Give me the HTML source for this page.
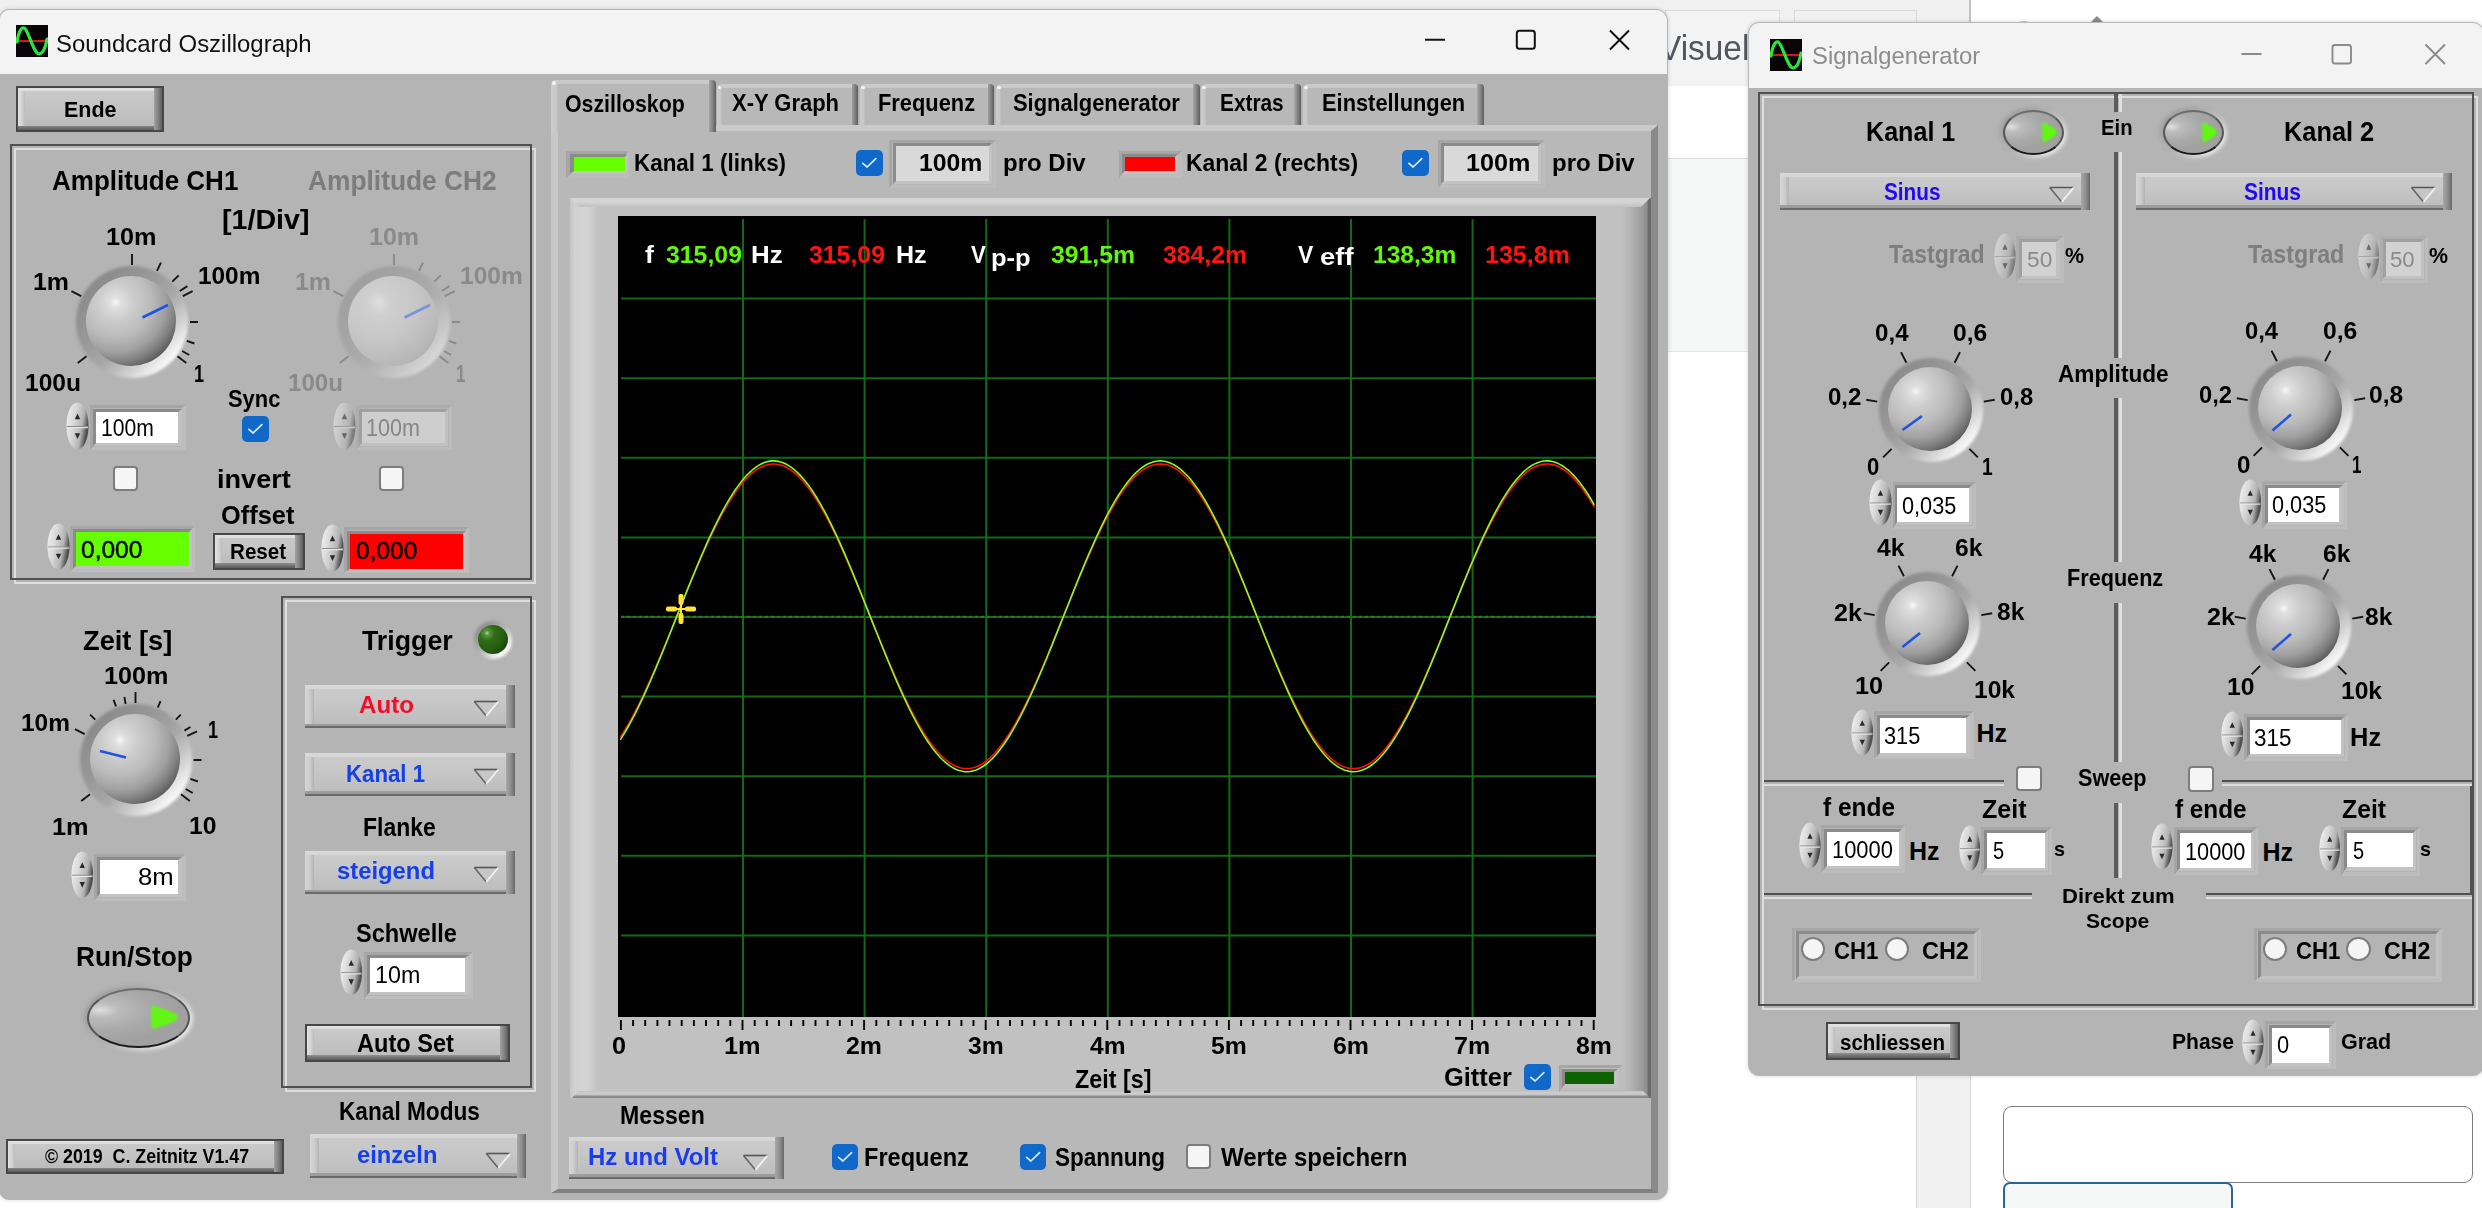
<!DOCTYPE html>
<html><head><meta charset="utf-8"><title>Soundcard Oszillograph</title><style>
html,body{margin:0;padding:0;background:#fff;}
body{width:2482px;height:1208px;overflow:hidden;position:relative;font-family:"Liberation Sans",sans-serif;}
div,span,svg{position:absolute;}
.abs{position:absolute;}
.t{white-space:pre;line-height:1;transform-origin:0 0;display:block;}
.win{box-sizing:border-box;background:#b4b4b4;border:1px solid #b4b4b4;overflow:hidden;box-shadow:0 0 4px rgba(0,0,0,.16);}
</style></head><body>
<div style="left:0.0px;top:0.0px;width:1971.0px;height:85.0px;background:#f0f0f0;"></div>
<div style="left:1969.0px;top:0.0px;width:2.0px;height:85.0px;background:#c2c2c2;"></div>
<div style="left:1665.0px;top:10.0px;width:115.0px;height:76.0px;box-sizing:border-box;border:1.5px solid #dcdcdc;border-bottom:none;background:#f3f3f3;"></div>
<div style="left:1794.0px;top:10.0px;width:123.0px;height:76.0px;box-sizing:border-box;border:1.5px solid #dcdcdc;border-bottom:none;"></div>
<span class="t" style="left:1659.33px;top:31.30px;font-size:34.5px;font-weight:normal;color:#4f565d;transform:scaleX(0.9680);">Visuel</span>
<div style="left:1660.0px;top:158.0px;width:100.0px;height:194.0px;background:#f5f6f6;border-top:1px solid #e0e0e0;border-bottom:1px solid #e6e6e6;box-sizing:border-box;"></div>
<svg style="position:absolute;left:2005px;top:10px" width="110" height="14" viewBox="0 0 110 14"><path d="M11 13.2A8 1.6 0 0 1 27 13.2Z" fill="#777"/><path d="M85 13L92 6L99 13Z" fill="#8a8a8a"/></svg>
<div style="left:1916.0px;top:1075.0px;width:55.0px;height:133.0px;box-sizing:border-box;background:#f0f0f0;border-left:1px solid #d6d6d6;border-right:1px solid #d6d6d6;"></div>
<div style="left:2003.0px;top:1105.5px;width:469.5px;height:77.0px;box-sizing:border-box;border:1.5px solid #7c7c7c;border-radius:9px;background:#fff;"></div>
<div style="left:2003.0px;top:1182.0px;width:229.5px;height:48.0px;box-sizing:border-box;border:2px solid #2b6596;border-radius:7px;background:#f6f8f8;"></div>
<div class="win" style="left:-1px;top:9px;width:1668.5px;height:1191px;border-radius:10px 12px 12px 10px;">
<div class="abs" style="left:0px;top:-10px;width:1px;height:1px">
<div style="left:0.0px;top:10.0px;width:1667.0px;height:64.0px;background:#f3f3f3;"></div>
<svg style="position:absolute;left:16px;top:25px" width="32" height="32" viewBox="0 0 32 32"><rect width="32" height="32" fill="#080408"/><path d="M0 16H32" stroke="#d01818" stroke-width="2"/><path d="M1 17C3 4 7 0 10 5C14 12 17 24 21 28C25 31 29 26 31 14" stroke="#28e63c" stroke-width="3.2" fill="none" stroke-linecap="round"/></svg>
<span class="t" style="left:56.42px;top:31.68px;font-size:24.6px;font-weight:normal;color:#111;transform:scaleX(0.9739);">Soundcard Oszillograph</span>
<svg style="position:absolute;left:1420px;top:24px" width="220" height="32" viewBox="0 0 220 32"><path d="M5 15.8H25" stroke="#111" stroke-width="2"/><rect x="96.8" y="6.8" width="18" height="18" rx="2.5" fill="none" stroke="#111" stroke-width="2"/><path d="M190 6.5L209 25.5M209 6.5L190 25.5" stroke="#111" stroke-width="2"/></svg>
<div style="left:16.0px;top:86.0px;width:148.0px;height:45.5px;box-sizing:border-box;border:2px solid #474747;background:linear-gradient(90deg,transparent calc(100% - 8px),#a2a2a2 calc(100% - 8px),#7a7a7a calc(100% - 3px),#5c5c5c 100%),linear-gradient(180deg,transparent calc(100% - 4.5px),#8c8c8c calc(100% - 4.5px),#6e6e6e calc(100% - 2px),#5a5a5a 100%),linear-gradient(180deg,#e4e4e4 0,#dcdcdc 3px,transparent 3.5px),linear-gradient(90deg,#e2e2e2 0,#d2d2d2 4px,#bcbcbc 7px,transparent 7.5px),linear-gradient(180deg,#cacaca 0%,#c3c3c3 50%,#b9b9b9 100%);"></div>
<span class="t" style="left:64.10px;top:100.30px;font-size:21.5px;font-weight:bold;color:#000;transform:scaleX(0.9995);">Ende</span>
<div style="left:14.0px;top:148.0px;width:522.0px;height:436.0px;box-sizing:border-box;border:2px solid #dedede;"></div>
<div style="left:10.0px;top:144.0px;width:522.0px;height:436.0px;box-sizing:border-box;border:2px solid #505050;"></div>
<span class="t" style="left:51.85px;top:166.37px;font-size:28.5px;font-weight:bold;color:#000;transform:scaleX(0.9123);">Amplitude CH1</span>
<span class="t" style="left:308.34px;top:166.37px;font-size:28.5px;font-weight:bold;color:#7c7c7c;transform:scaleX(0.9241);">Amplitude CH2</span>
<span class="t" style="left:222.42px;top:204.87px;font-size:28.5px;font-weight:bold;color:#000;transform:scaleX(1.0051);">[1/Div]</span>
<div style="left:76.0px;top:266.0px;width:112.0px;height:112.0px;border-radius:50%;background:linear-gradient(135deg,#8a8a8a 14%,#989898 38%,#a8a8a8 56%,#d2d2d2 72%,#ffffff 86%);filter:blur(1.5px);"></div>
<div style="left:86.0px;top:276.0px;width:90.0px;height:90.0px;border-radius:50%;background:radial-gradient(circle at 33% 29%,#f8f8f8 0%,#e0e0e0 6%,#cdcdcd 20%,#bbbbbb 40%,#a0a0a0 57%,#7e7e7e 69%,#5a5a5a 79%);"></div>
<svg style="position:absolute;left:0;top:0;overflow:visible" width="1" height="1"><path d="M132.0 265.0L132.0 254.0M157.0 270.8L160.9 262.7M172.3 281.7L178.7 275.3M179.8 291.0L187.4 286.1M182.8 296.1L192.6 291.1M190.0 322.0L198.0 322.0M186.8 340.9L194.4 343.5M182.2 351.0L189.2 355.0M177.5 356.3L186.3 362.9M81.2 296.1L71.4 291.1M86.5 356.3L77.7 362.9" stroke="#151515" stroke-width="1.9" fill="none"/><path d="M142.5 317.5L168 305" stroke="#2152e0" stroke-width="2.6" fill="none"/></svg>
<span class="t" style="left:106.48px;top:226.03px;font-size:23px;font-weight:bold;color:#000;transform:scaleX(1.0985);">10m</span>
<span class="t" style="left:32.51px;top:270.53px;font-size:23px;font-weight:bold;color:#000;transform:scaleX(1.0829);">1m</span>
<span class="t" style="left:197.54px;top:264.53px;font-size:23px;font-weight:bold;color:#000;transform:scaleX(1.0602);">100m</span>
<span class="t" style="left:25.02px;top:372.03px;font-size:23px;font-weight:bold;color:#000;transform:scaleX(1.0693);">100u</span>
<span class="t" style="left:193.91px;top:363.03px;font-size:23px;font-weight:bold;color:#000;transform:scaleX(0.7863);">1</span>
<div style="left:338.0px;top:266.0px;width:112.0px;height:112.0px;border-radius:50%;background:linear-gradient(135deg,#8a8a8a 14%,#989898 38%,#a8a8a8 56%,#d2d2d2 72%,#ffffff 86%);filter:blur(1.5px);opacity:.5;"></div>
<div style="left:348.0px;top:276.0px;width:90.0px;height:90.0px;border-radius:50%;background:radial-gradient(circle at 34% 30%,#dedede 0%,#cfcfcf 14%,#c6c6c6 45%,#b8b8b8 72%,#9c9c9c 100%);"></div>
<svg style="position:absolute;left:0;top:0;overflow:visible" width="1" height="1"><path d="M394.0 265.0L394.0 254.0M419.0 270.8L422.9 262.7M434.3 281.7L440.7 275.3M441.8 291.0L449.4 286.1M444.8 296.1L454.6 291.1M452.0 322.0L460.0 322.0M448.8 340.9L456.4 343.5M444.2 351.0L451.2 355.0M439.5 356.3L448.3 362.9M343.2 296.1L333.4 291.1M348.5 356.3L339.7 362.9" stroke="#8a8a8a" stroke-width="1.9" fill="none"/><path d="M404.5 317.5L430 305" stroke="#7a92dc" stroke-width="2.6" fill="none"/></svg>
<span class="t" style="left:368.50px;top:226.03px;font-size:23px;font-weight:bold;color:#8a8a8a;transform:scaleX(1.0870);">10m</span>
<span class="t" style="left:294.51px;top:270.53px;font-size:23px;font-weight:bold;color:#8a8a8a;transform:scaleX(1.0829);">1m</span>
<span class="t" style="left:459.52px;top:264.53px;font-size:23px;font-weight:bold;color:#8a8a8a;transform:scaleX(1.0691);">100m</span>
<span class="t" style="left:287.55px;top:372.03px;font-size:23px;font-weight:bold;color:#8a8a8a;transform:scaleX(1.0491);">100u</span>
<span class="t" style="left:456.48px;top:363.03px;font-size:23px;font-weight:bold;color:#8a8a8a;transform:scaleX(0.7401);">1</span>
<span class="t" style="left:228.34px;top:387.26px;font-size:24.5px;font-weight:bold;color:#000;transform:scaleX(0.8934);">Sync</span>
<div style="left:242.0px;top:416.0px;width:26.5px;height:26.0px;border-radius:5px;background:#1068c9;"><svg width="26.5" height="26.0" viewBox="0 0 26 26" style="position:absolute;left:0;top:0"><path d="M6.6 13.4L10.9 17L19.6 8.6" stroke="#d8ecff" stroke-width="1.7" fill="none" stroke-linecap="round" stroke-linejoin="round"/></svg></div>
<div style="left:66.0px;top:402.0px;width:23.0px;height:48.0px;"><svg width="23.0" height="48.0" viewBox="0 0 22 46" preserveAspectRatio="none" style="position:absolute;left:0;top:0;"><defs><linearGradient id="spg" x1="0" y1="0" x2="1" y2="0.35"><stop offset="0" stop-color="#f4f4f4"/><stop offset=".4" stop-color="#dadada"/><stop offset=".78" stop-color="#b4b4b4"/><stop offset="1" stop-color="#505050"/></linearGradient></defs><ellipse cx="11" cy="23" rx="10.6" ry="22.6" fill="url(#spg)"/><path d="M1 23.5H21" stroke="#8a8a8a" stroke-width="1"/><path d="M1 24.6H21" stroke="#eee" stroke-width="1"/><path d="M11 11L13.6 16.5H8.4Z" fill="#2a2a2a"/><path d="M11 35.5L13.6 30H8.4Z" fill="#2a2a2a"/></svg></div>
<div style="left:89.5px;top:405.0px;width:96.5px;height:44.5px;box-sizing:border-box;border-style:solid;border-width:3.50px 4.00px 3.75px 3.50px;border-color:#a6a6a6 #bdbdbd #bdbdbd #a6a6a6;"></div>
<div style="left:93.0px;top:408.5px;width:89.0px;height:37.2px;box-sizing:border-box;border-style:solid;border-width:3.50px 4.00px 3.75px 3.50px;border-color:#8b8b8b #c2c2c2 #c2c2c2 #8b8b8b;background:#fff;"></div>
<span class="t" style="left:100.91px;top:416.53px;font-size:23px;font-weight:normal;color:#000;transform:scaleX(0.9192);">100m</span>
<div style="left:333.0px;top:402.0px;width:23.0px;height:48.0px;"><svg width="23.0" height="48.0" viewBox="0 0 22 46" preserveAspectRatio="none" style="position:absolute;left:0;top:0;opacity:.55;"><defs><linearGradient id="spg" x1="0" y1="0" x2="1" y2="0.35"><stop offset="0" stop-color="#f4f4f4"/><stop offset=".4" stop-color="#dadada"/><stop offset=".78" stop-color="#b4b4b4"/><stop offset="1" stop-color="#505050"/></linearGradient></defs><ellipse cx="11" cy="23" rx="10.6" ry="22.6" fill="url(#spg)"/><path d="M1 23.5H21" stroke="#8a8a8a" stroke-width="1"/><path d="M1 24.6H21" stroke="#eee" stroke-width="1"/><path d="M11 11L13.6 16.5H8.4Z" fill="#2a2a2a"/><path d="M11 35.5L13.6 30H8.4Z" fill="#2a2a2a"/></svg></div>
<div style="left:356.0px;top:405.0px;width:96.0px;height:44.5px;box-sizing:border-box;border-style:solid;border-width:3.50px 3.75px 3.75px 3.25px;border-color:#adadad #bcbcbc #bcbcbc #adadad;"></div>
<div style="left:359.2px;top:408.5px;width:89.0px;height:37.2px;box-sizing:border-box;border-style:solid;border-width:3.50px 3.75px 3.75px 3.25px;border-color:#a0a0a0 #c0c0c0 #c0c0c0 #a0a0a0;background:#cecece;"></div>
<span class="t" style="left:365.88px;top:416.53px;font-size:23px;font-weight:normal;color:#868686;transform:scaleX(0.9376);">100m</span>
<div style="left:112.5px;top:466.0px;width:25.0px;height:25.0px;box-sizing:border-box;border-radius:4px;background:#f5f5f5;border:2px solid #7c7c7c;"></div>
<div style="left:378.5px;top:466.0px;width:25.0px;height:25.0px;box-sizing:border-box;border-radius:4px;background:#f5f5f5;border:2px solid #7c7c7c;"></div>
<span class="t" style="left:217.10px;top:465.57px;font-size:26.5px;font-weight:bold;color:#000;transform:scaleX(1.0220);">invert</span>
<span class="t" style="left:221.48px;top:502.84px;font-size:25px;font-weight:bold;color:#000;transform:scaleX(1.0159);">Offset</span>
<div style="left:47.0px;top:523.0px;width:23.0px;height:47.0px;"><svg width="23.0" height="47.0" viewBox="0 0 22 46" preserveAspectRatio="none" style="position:absolute;left:0;top:0;"><defs><linearGradient id="spg" x1="0" y1="0" x2="1" y2="0.35"><stop offset="0" stop-color="#f4f4f4"/><stop offset=".4" stop-color="#dadada"/><stop offset=".78" stop-color="#b4b4b4"/><stop offset="1" stop-color="#505050"/></linearGradient></defs><ellipse cx="11" cy="23" rx="10.6" ry="22.6" fill="url(#spg)"/><path d="M1 23.5H21" stroke="#8a8a8a" stroke-width="1"/><path d="M1 24.6H21" stroke="#eee" stroke-width="1"/><path d="M11 11L13.6 16.5H8.4Z" fill="#2a2a2a"/><path d="M11 35.5L13.6 30H8.4Z" fill="#2a2a2a"/></svg></div>
<div style="left:70.0px;top:526.0px;width:125.0px;height:46.0px;box-sizing:border-box;border-style:solid;border-width:3.00px 3.25px 3.00px 3.00px;border-color:#a6a6a6 #bdbdbd #bdbdbd #a6a6a6;"></div>
<div style="left:73.0px;top:529.0px;width:118.8px;height:40.0px;box-sizing:border-box;border-style:solid;border-width:3.00px 3.25px 3.00px 3.00px;border-color:#8b8b8b #c2c2c2 #c2c2c2 #8b8b8b;background:#66ff00;"></div>
<span class="t" style="left:80.52px;top:537.68px;font-size:24px;font-weight:normal;color:#000;transform:scaleX(1.0223);-webkit-text-stroke:.4px #000;">0,000</span>
<div style="left:212.5px;top:532.5px;width:92.0px;height:37.0px;box-sizing:border-box;border:2px solid #474747;background:linear-gradient(90deg,transparent calc(100% - 8px),#a2a2a2 calc(100% - 8px),#7a7a7a calc(100% - 3px),#5c5c5c 100%),linear-gradient(180deg,transparent calc(100% - 4.5px),#8c8c8c calc(100% - 4.5px),#6e6e6e calc(100% - 2px),#5a5a5a 100%),linear-gradient(180deg,#e4e4e4 0,#dcdcdc 3px,transparent 3.5px),linear-gradient(90deg,#e2e2e2 0,#d2d2d2 4px,#bcbcbc 7px,transparent 7.5px),linear-gradient(180deg,#cacaca 0%,#c3c3c3 50%,#b9b9b9 100%);"></div>
<span class="t" style="left:230.16px;top:540.95px;font-size:22.5px;font-weight:bold;color:#000;transform:scaleX(0.9158);">Reset</span>
<div style="left:320.5px;top:524.0px;width:23.0px;height:48.0px;"><svg width="23.0" height="48.0" viewBox="0 0 22 46" preserveAspectRatio="none" style="position:absolute;left:0;top:0;"><defs><linearGradient id="spg" x1="0" y1="0" x2="1" y2="0.35"><stop offset="0" stop-color="#f4f4f4"/><stop offset=".4" stop-color="#dadada"/><stop offset=".78" stop-color="#b4b4b4"/><stop offset="1" stop-color="#505050"/></linearGradient></defs><ellipse cx="11" cy="23" rx="10.6" ry="22.6" fill="url(#spg)"/><path d="M1 23.5H21" stroke="#8a8a8a" stroke-width="1"/><path d="M1 24.6H21" stroke="#eee" stroke-width="1"/><path d="M11 11L13.6 16.5H8.4Z" fill="#2a2a2a"/><path d="M11 35.5L13.6 30H8.4Z" fill="#2a2a2a"/></svg></div>
<div style="left:343.5px;top:527.0px;width:125.5px;height:46.0px;box-sizing:border-box;border-style:solid;border-width:3.50px 3.25px 2.50px 3.25px;border-color:#a6a6a6 #bdbdbd #bdbdbd #a6a6a6;"></div>
<div style="left:346.8px;top:530.5px;width:119.0px;height:40.0px;box-sizing:border-box;border-style:solid;border-width:3.50px 3.25px 2.50px 3.25px;border-color:#8b8b8b #c2c2c2 #c2c2c2 #8b8b8b;background:#ff0000;"></div>
<span class="t" style="left:355.52px;top:539.18px;font-size:24px;font-weight:normal;color:#000;transform:scaleX(1.0223);-webkit-text-stroke:.4px #000;">0,000</span>
<span class="t" style="left:83.18px;top:626.37px;font-size:28.5px;font-weight:bold;color:#000;transform:scaleX(0.9554);">Zeit [s]</span>
<span class="t" style="left:103.99px;top:664.53px;font-size:23px;font-weight:bold;color:#000;transform:scaleX(1.0959);">100m</span>
<div style="left:79.5px;top:704.0px;width:112.0px;height:112.0px;border-radius:50%;background:linear-gradient(135deg,#8a8a8a 14%,#989898 38%,#a8a8a8 56%,#d2d2d2 72%,#ffffff 86%);filter:blur(1.5px);"></div>
<div style="left:89.5px;top:714.0px;width:90.0px;height:90.0px;border-radius:50%;background:radial-gradient(circle at 33% 29%,#f8f8f8 0%,#e0e0e0 6%,#cdcdcd 20%,#bbbbbb 40%,#a0a0a0 57%,#7e7e7e 69%,#5a5a5a 79%);"></div>
<svg style="position:absolute;left:0;top:0;overflow:visible" width="1" height="1"><path d="M135.5 703.0L135.5 692.0M125.6 703.9L124.4 697.0M116.0 706.4L113.6 699.9M157.8 707.5L160.5 701.1M175.8 719.7L180.8 714.7M184.4 730.6L190.4 727.0M187.2 735.9L197.1 731.3M193.5 760.0L201.5 760.0M190.3 778.9L197.9 781.5M185.7 789.0L192.7 793.0M181.0 794.3L189.8 800.9M84.7 734.1L74.9 729.1M95.2 719.7L90.2 714.7M90.0 794.3L81.2 800.9" stroke="#151515" stroke-width="1.9" fill="none"/><path d="M100 751L126 757.5" stroke="#2152e0" stroke-width="2.6" fill="none"/></svg>
<span class="t" style="left:21.03px;top:712.03px;font-size:23px;font-weight:bold;color:#000;transform:scaleX(1.0638);">10m</span>
<span class="t" style="left:207.91px;top:718.53px;font-size:23px;font-weight:bold;color:#000;transform:scaleX(0.7863);">1</span>
<span class="t" style="left:52.48px;top:816.03px;font-size:23px;font-weight:bold;color:#000;transform:scaleX(1.0993);">1m</span>
<span class="t" style="left:189.01px;top:814.53px;font-size:23px;font-weight:bold;color:#000;transform:scaleX(1.0762);">10</span>
<div style="left:70.5px;top:850.5px;width:22.5px;height:47.5px;"><svg width="22.5" height="47.5" viewBox="0 0 22 46" preserveAspectRatio="none" style="position:absolute;left:0;top:0;"><defs><linearGradient id="spg" x1="0" y1="0" x2="1" y2="0.35"><stop offset="0" stop-color="#f4f4f4"/><stop offset=".4" stop-color="#dadada"/><stop offset=".78" stop-color="#b4b4b4"/><stop offset="1" stop-color="#505050"/></linearGradient></defs><ellipse cx="11" cy="23" rx="10.6" ry="22.6" fill="url(#spg)"/><path d="M1 23.5H21" stroke="#8a8a8a" stroke-width="1"/><path d="M1 24.6H21" stroke="#eee" stroke-width="1"/><path d="M11 11L13.6 16.5H8.4Z" fill="#2a2a2a"/><path d="M11 35.5L13.6 30H8.4Z" fill="#2a2a2a"/></svg></div>
<div style="left:93.5px;top:853.5px;width:92.5px;height:47.0px;box-sizing:border-box;border-style:solid;border-width:3.25px 4.00px 3.50px 3.25px;border-color:#a6a6a6 #bdbdbd #bdbdbd #a6a6a6;"></div>
<div style="left:96.8px;top:856.8px;width:85.2px;height:40.2px;box-sizing:border-box;border-style:solid;border-width:3.25px 4.00px 3.50px 3.25px;border-color:#8b8b8b #c2c2c2 #c2c2c2 #8b8b8b;background:#fff;"></div>
<span class="t" style="left:137.97px;top:865.53px;font-size:23px;font-weight:normal;color:#000;transform:scaleX(1.1166);">8m</span>
<span class="t" style="left:76.29px;top:942.37px;font-size:28.5px;font-weight:bold;color:#000;transform:scaleX(0.9217);">Run/Stop</span>
<div style="left:83.5px;top:984.5px;width:109.4px;height:66.0px;border-radius:50%;background:linear-gradient(135deg,#9a9a9a 15%,#b0b0b0 45%,#f2f2f2 88%);filter:blur(2.2px);"></div>
<div style="left:86.5px;top:987.5px;width:103.4px;height:60.0px;box-sizing:border-box;border-radius:50%;border:2px solid #555;border-bottom-color:#1c1c1c;border-top-color:#6c6c6c;background:radial-gradient(ellipse at 12% 36%,#dedede 0%,#bcbcbc 14%,#aaaaaa 38%,#a0a0a0 65%,#a4a4a4 100%);"></div>
<svg style="position:absolute;left:148.8px;top:1002.8px;filter:blur(.8px)" width="30.2" height="28.4" viewBox="0 0 30 26" preserveAspectRatio="none"><path d="M3 2Q1 13 3 24Q16 21 27 16Q30 13 27 10Q16 5 3 2Z" fill="#62f614"/></svg>
<div style="left:284.5px;top:600.0px;width:251.5px;height:492.0px;box-sizing:border-box;border:2px solid #dedede;"></div>
<div style="left:280.5px;top:596.0px;width:251.5px;height:492.0px;box-sizing:border-box;border:2px solid #505050;"></div>
<span class="t" style="left:362.23px;top:626.37px;font-size:28.5px;font-weight:bold;color:#000;transform:scaleX(0.9385);">Trigger</span>
<div style="left:473.5px;top:620.5px;width:38.5px;height:38.0px;border-radius:50%;background:linear-gradient(135deg,#8e8e8e 18%,#b4b4b4 50%,#ffffff 82%);filter:blur(1.8px);"></div>
<div style="left:477.5px;top:624.5px;width:30.5px;height:29.5px;border-radius:50%;background:radial-gradient(circle at 30% 28%,#a8dc98 0%,#5a9640 8%,#2f6c17 26%,#265c10 58%,#1a420a 85%,#143408 100%);filter:blur(.5px);"></div>
<div style="left:304.5px;top:684.5px;width:210.0px;height:43.0px;background:linear-gradient(90deg,transparent calc(100% - 9px),#a8a8a8 calc(100% - 9px),#8c8c8c calc(100% - 4px),#686868 100%),linear-gradient(180deg,transparent calc(100% - 4.5px),#9e9e9e calc(100% - 4.5px),#9a9a9a calc(100% - 2.2px),#6a6a6a calc(100% - 2.2px)),linear-gradient(180deg,#d8d8d8 0,#d6d6d6 4px,transparent 4px),linear-gradient(90deg,#d6d6d6 0,#cccccc 5px,#b6b6b6 8.5px,transparent 9px),linear-gradient(180deg,#cbcbcb 0%,#c7c7c7 40%,#bbbbbb 100%);"></div>
<svg style="position:absolute;left:472.5px;top:699.5px" width="26.5" height="17.0" viewBox="0 0 26 17"><path d="M1 1.5H25L13 16Z" fill="#c6c6c6" stroke="none"/><path d="M1 1.5H25" stroke="#555" stroke-width="1.6" fill="none"/><path d="M1 1.5L13 16" stroke="#666" stroke-width="1.6" fill="none"/><path d="M25 1.5L13 16" stroke="#f2f2f2" stroke-width="1.8" fill="none"/></svg>
<span class="t" style="left:359.40px;top:693.26px;font-size:24.5px;font-weight:bold;color:#f0102c;transform:scaleX(0.9859);">Auto</span>
<div style="left:304.5px;top:752.5px;width:210.0px;height:43.0px;background:linear-gradient(90deg,transparent calc(100% - 9px),#a8a8a8 calc(100% - 9px),#8c8c8c calc(100% - 4px),#686868 100%),linear-gradient(180deg,transparent calc(100% - 4.5px),#9e9e9e calc(100% - 4.5px),#9a9a9a calc(100% - 2.2px),#6a6a6a calc(100% - 2.2px)),linear-gradient(180deg,#d8d8d8 0,#d6d6d6 4px,transparent 4px),linear-gradient(90deg,#d6d6d6 0,#cccccc 5px,#b6b6b6 8.5px,transparent 9px),linear-gradient(180deg,#cbcbcb 0%,#c7c7c7 40%,#bbbbbb 100%);"></div>
<svg style="position:absolute;left:472.5px;top:767.5px" width="26.5" height="17.0" viewBox="0 0 26 17"><path d="M1 1.5H25L13 16Z" fill="#c6c6c6" stroke="none"/><path d="M1 1.5H25" stroke="#555" stroke-width="1.6" fill="none"/><path d="M1 1.5L13 16" stroke="#666" stroke-width="1.6" fill="none"/><path d="M25 1.5L13 16" stroke="#f2f2f2" stroke-width="1.8" fill="none"/></svg>
<span class="t" style="left:346.06px;top:761.76px;font-size:24.5px;font-weight:bold;color:#1440e6;transform:scaleX(0.9070);">Kanal 1</span>
<span class="t" style="left:362.51px;top:815.34px;font-size:25px;font-weight:bold;color:#000;transform:scaleX(0.9186);">Flanke</span>
<div style="left:304.5px;top:850.5px;width:210.0px;height:43.0px;background:linear-gradient(90deg,transparent calc(100% - 9px),#a8a8a8 calc(100% - 9px),#8c8c8c calc(100% - 4px),#686868 100%),linear-gradient(180deg,transparent calc(100% - 4.5px),#9e9e9e calc(100% - 4.5px),#9a9a9a calc(100% - 2.2px),#6a6a6a calc(100% - 2.2px)),linear-gradient(180deg,#d8d8d8 0,#d6d6d6 4px,transparent 4px),linear-gradient(90deg,#d6d6d6 0,#cccccc 5px,#b6b6b6 8.5px,transparent 9px),linear-gradient(180deg,#cbcbcb 0%,#c7c7c7 40%,#bbbbbb 100%);"></div>
<svg style="position:absolute;left:472.5px;top:865.5px" width="26.5" height="17.0" viewBox="0 0 26 17"><path d="M1 1.5H25L13 16Z" fill="#c6c6c6" stroke="none"/><path d="M1 1.5H25" stroke="#555" stroke-width="1.6" fill="none"/><path d="M1 1.5L13 16" stroke="#666" stroke-width="1.6" fill="none"/><path d="M25 1.5L13 16" stroke="#f2f2f2" stroke-width="1.8" fill="none"/></svg>
<span class="t" style="left:337.17px;top:859.26px;font-size:24.5px;font-weight:bold;color:#1440e6;transform:scaleX(0.9721);">steigend</span>
<span class="t" style="left:355.79px;top:920.84px;font-size:25px;font-weight:bold;color:#000;transform:scaleX(0.9431);">Schwelle</span>
<div style="left:340.0px;top:948.5px;width:22.5px;height:46.5px;"><svg width="22.5" height="46.5" viewBox="0 0 22 46" preserveAspectRatio="none" style="position:absolute;left:0;top:0;"><defs><linearGradient id="spg" x1="0" y1="0" x2="1" y2="0.35"><stop offset="0" stop-color="#f4f4f4"/><stop offset=".4" stop-color="#dadada"/><stop offset=".78" stop-color="#b4b4b4"/><stop offset="1" stop-color="#505050"/></linearGradient></defs><ellipse cx="11" cy="23" rx="10.6" ry="22.6" fill="url(#spg)"/><path d="M1 23.5H21" stroke="#8a8a8a" stroke-width="1"/><path d="M1 24.6H21" stroke="#eee" stroke-width="1"/><path d="M11 11L13.6 16.5H8.4Z" fill="#2a2a2a"/><path d="M11 35.5L13.6 30H8.4Z" fill="#2a2a2a"/></svg></div>
<div style="left:363.5px;top:952.0px;width:109.0px;height:47.0px;box-sizing:border-box;border-style:solid;border-width:3.25px 4.00px 3.75px 3.25px;border-color:#a6a6a6 #bdbdbd #bdbdbd #a6a6a6;"></div>
<div style="left:366.8px;top:955.2px;width:101.8px;height:40.0px;box-sizing:border-box;border-style:solid;border-width:3.25px 4.00px 3.75px 3.25px;border-color:#8b8b8b #c2c2c2 #c2c2c2 #8b8b8b;background:#fff;"></div>
<span class="t" style="left:374.75px;top:963.53px;font-size:23px;font-weight:normal;color:#000;transform:scaleX(1.0117);">10m</span>
<div style="left:304.5px;top:1024.0px;width:205.5px;height:37.5px;box-sizing:border-box;border:2px solid #474747;background:linear-gradient(90deg,transparent calc(100% - 8px),#a2a2a2 calc(100% - 8px),#7a7a7a calc(100% - 3px),#5c5c5c 100%),linear-gradient(180deg,transparent calc(100% - 4.5px),#8c8c8c calc(100% - 4.5px),#6e6e6e calc(100% - 2px),#5a5a5a 100%),linear-gradient(180deg,#e4e4e4 0,#dcdcdc 3px,transparent 3.5px),linear-gradient(90deg,#e2e2e2 0,#d2d2d2 4px,#bcbcbc 7px,transparent 7.5px),linear-gradient(180deg,#cacaca 0%,#c3c3c3 50%,#b9b9b9 100%);"></div>
<span class="t" style="left:356.91px;top:1030.84px;font-size:25px;font-weight:bold;color:#000;transform:scaleX(0.9423);">Auto Set</span>
<span class="t" style="left:338.53px;top:1099.34px;font-size:25px;font-weight:bold;color:#000;transform:scaleX(0.9060);">Kanal Modus</span>
<div style="left:310.0px;top:1134.0px;width:216.0px;height:43.5px;background:linear-gradient(90deg,transparent calc(100% - 9px),#a8a8a8 calc(100% - 9px),#8c8c8c calc(100% - 4px),#686868 100%),linear-gradient(180deg,transparent calc(100% - 4.5px),#9e9e9e calc(100% - 4.5px),#9a9a9a calc(100% - 2.2px),#6a6a6a calc(100% - 2.2px)),linear-gradient(180deg,#d8d8d8 0,#d6d6d6 4px,transparent 4px),linear-gradient(90deg,#d6d6d6 0,#cccccc 5px,#b6b6b6 8.5px,transparent 9px),linear-gradient(180deg,#cbcbcb 0%,#c7c7c7 40%,#bbbbbb 100%);"></div>
<svg style="position:absolute;left:484.5px;top:1152.0px" width="26.5" height="17.0" viewBox="0 0 26 17"><path d="M1 1.5H25L13 16Z" fill="#c6c6c6" stroke="none"/><path d="M1 1.5H25" stroke="#555" stroke-width="1.6" fill="none"/><path d="M1 1.5L13 16" stroke="#666" stroke-width="1.6" fill="none"/><path d="M25 1.5L13 16" stroke="#f2f2f2" stroke-width="1.8" fill="none"/></svg>
<span class="t" style="left:357.05px;top:1143.26px;font-size:24.5px;font-weight:bold;color:#1440e6;transform:scaleX(0.9677);">einzeln</span>
<div style="left:6.0px;top:1138.5px;width:278.0px;height:35.5px;box-sizing:border-box;border:2px solid #474747;background:linear-gradient(90deg,transparent calc(100% - 8px),#a2a2a2 calc(100% - 8px),#7a7a7a calc(100% - 3px),#5c5c5c 100%),linear-gradient(180deg,transparent calc(100% - 4.5px),#8c8c8c calc(100% - 4.5px),#6e6e6e calc(100% - 2px),#5a5a5a 100%),linear-gradient(180deg,#e4e4e4 0,#dcdcdc 3px,transparent 3.5px),linear-gradient(90deg,#e2e2e2 0,#d2d2d2 4px,#bcbcbc 7px,transparent 7.5px),linear-gradient(180deg,#cacaca 0%,#c3c3c3 50%,#b9b9b9 100%);"></div>
<span class="t" style="left:44.73px;top:1147.49px;font-size:19.5px;font-weight:bold;color:#000;transform:scaleX(0.9128);">© 2019  C. Zeitnitz V1.47</span>
<div style="left:716.5px;top:84.0px;width:141.0px;height:40.5px;background:linear-gradient(90deg,transparent calc(100% - 6.5px),#a4a4a4 calc(100% - 6.5px),#808080 calc(100% - 3px),#5c5c5c 100%),linear-gradient(180deg,#cbcbcb 0,#c8c8c8 4px,transparent 4.5px),linear-gradient(90deg,#cccccc 0,#c6c6c6 4px,transparent 5px),linear-gradient(180deg,#b8b8b8,#b8b8b8);border-radius:5px 4px 0 0;"></div>
<div style="left:717.5px;top:85.5px;width:3.5px;height:3.5px;background:#f4f4f4;border-radius:50%;filter:blur(.6px);"></div>
<span class="t" style="left:731.78px;top:92.36px;font-size:23.2px;font-weight:bold;color:#000;transform:scaleX(0.9474);">X-Y Graph</span>
<div style="left:860.0px;top:84.0px;width:134.0px;height:40.5px;background:linear-gradient(90deg,transparent calc(100% - 6.5px),#a4a4a4 calc(100% - 6.5px),#808080 calc(100% - 3px),#5c5c5c 100%),linear-gradient(180deg,#cbcbcb 0,#c8c8c8 4px,transparent 4.5px),linear-gradient(90deg,#cccccc 0,#c6c6c6 4px,transparent 5px),linear-gradient(180deg,#b8b8b8,#b8b8b8);border-radius:5px 4px 0 0;"></div>
<div style="left:861.0px;top:85.5px;width:3.5px;height:3.5px;background:#f4f4f4;border-radius:50%;filter:blur(.6px);"></div>
<span class="t" style="left:878.08px;top:92.36px;font-size:23.2px;font-weight:bold;color:#000;transform:scaleX(0.9424);">Frequenz</span>
<div style="left:996.0px;top:84.0px;width:203.5px;height:40.5px;background:linear-gradient(90deg,transparent calc(100% - 6.5px),#a4a4a4 calc(100% - 6.5px),#808080 calc(100% - 3px),#5c5c5c 100%),linear-gradient(180deg,#cbcbcb 0,#c8c8c8 4px,transparent 4.5px),linear-gradient(90deg,#cccccc 0,#c6c6c6 4px,transparent 5px),linear-gradient(180deg,#b8b8b8,#b8b8b8);border-radius:5px 4px 0 0;"></div>
<div style="left:997.0px;top:85.5px;width:3.5px;height:3.5px;background:#f4f4f4;border-radius:50%;filter:blur(.6px);"></div>
<span class="t" style="left:1013.34px;top:92.36px;font-size:23.2px;font-weight:bold;color:#000;transform:scaleX(0.9452);">Signalgenerator</span>
<div style="left:1201.0px;top:84.0px;width:100.0px;height:40.5px;background:linear-gradient(90deg,transparent calc(100% - 6.5px),#a4a4a4 calc(100% - 6.5px),#808080 calc(100% - 3px),#5c5c5c 100%),linear-gradient(180deg,#cbcbcb 0,#c8c8c8 4px,transparent 4.5px),linear-gradient(90deg,#cccccc 0,#c6c6c6 4px,transparent 5px),linear-gradient(180deg,#b8b8b8,#b8b8b8);border-radius:5px 4px 0 0;"></div>
<div style="left:1202.0px;top:85.5px;width:3.5px;height:3.5px;background:#f4f4f4;border-radius:50%;filter:blur(.6px);"></div>
<span class="t" style="left:1219.64px;top:92.36px;font-size:23.2px;font-weight:bold;color:#000;transform:scaleX(0.8986);">Extras</span>
<div style="left:1303.0px;top:84.0px;width:181.0px;height:40.5px;background:linear-gradient(90deg,transparent calc(100% - 6.5px),#a4a4a4 calc(100% - 6.5px),#808080 calc(100% - 3px),#5c5c5c 100%),linear-gradient(180deg,#cbcbcb 0,#c8c8c8 4px,transparent 4.5px),linear-gradient(90deg,#cccccc 0,#c6c6c6 4px,transparent 5px),linear-gradient(180deg,#b8b8b8,#b8b8b8);border-radius:5px 4px 0 0;"></div>
<div style="left:1304.0px;top:85.5px;width:3.5px;height:3.5px;background:#f4f4f4;border-radius:50%;filter:blur(.6px);"></div>
<span class="t" style="left:1321.58px;top:92.36px;font-size:23.2px;font-weight:bold;color:#000;transform:scaleX(0.9418);">Einstellungen</span>
<div style="left:551.0px;top:124.5px;width:1107.0px;height:1068.0px;box-sizing:border-box;background:#b8b8b8;border-style:solid;border-width:6px 7px 4.5px 7px;border-color:#cacaca #8a8a8a #808080 #c8c8c8;"></div>
<div style="left:551.0px;top:79.5px;width:165.0px;height:52.0px;background:linear-gradient(90deg,transparent calc(100% - 7px),#a4a4a4 calc(100% - 7px),#808080 calc(100% - 3px),#5c5c5c 100%),linear-gradient(180deg,#cbcbcb 0,#c8c8c8 4px,transparent 4.5px),linear-gradient(90deg,#cccccc 0,#c6c6c6 6px,transparent 7px),linear-gradient(180deg,#b8b8b8,#b8b8b8);border-radius:5px 4px 0 0;"></div>
<div style="left:552.0px;top:81.0px;width:3.5px;height:3.5px;background:#f4f4f4;border-radius:50%;filter:blur(.6px);"></div>
<div style="left:558.0px;top:124.0px;width:151.0px;height:8.0px;background:#b8b8b8;"></div>
<span class="t" style="left:565.15px;top:92.86px;font-size:23.2px;font-weight:bold;color:#000;transform:scaleX(0.9197);">Oszilloskop</span>
<div style="left:566.0px;top:150.5px;width:63.0px;height:27.0px;box-sizing:border-box;border-style:solid;border-width:3.50px 2.50px 3.75px 4.00px;border-color:#a6a6a6 #bdbdbd #bdbdbd #a6a6a6;"></div>
<div style="left:570.0px;top:154.0px;width:56.5px;height:19.8px;box-sizing:border-box;border-style:solid;border-width:3.50px 2.50px 3.75px 4.00px;border-color:#8b8b8b #c2c2c2 #c2c2c2 #8b8b8b;background:#66ff00;"></div>
<span class="t" style="left:634.04px;top:150.76px;font-size:24.5px;font-weight:bold;color:#000;transform:scaleX(0.9155);">Kanal 1 (links)</span>
<div style="left:856.0px;top:150.0px;width:26.5px;height:26.0px;border-radius:5px;background:#1068c9;"><svg width="26.5" height="26.0" viewBox="0 0 26 26" style="position:absolute;left:0;top:0"><path d="M6.6 13.4L10.9 17L19.6 8.6" stroke="#d8ecff" stroke-width="1.7" fill="none" stroke-linecap="round" stroke-linejoin="round"/></svg></div>
<div style="left:889.0px;top:140.0px;width:107.0px;height:47.5px;box-sizing:border-box;border-style:solid;border-width:3.00px 3.75px 3.75px 3.50px;border-color:#a6a6a6 #bdbdbd #bdbdbd #a6a6a6;"></div>
<div style="left:892.5px;top:143.0px;width:99.8px;height:40.8px;box-sizing:border-box;border-style:solid;border-width:3.00px 3.75px 3.75px 3.50px;border-color:#8b8b8b #c2c2c2 #c2c2c2 #8b8b8b;background:#d9d9d9;"></div>
<span class="t" style="left:919.01px;top:150.76px;font-size:24.5px;font-weight:bold;color:#000;transform:scaleX(1.0120);font-weight:600;">100m</span>
<span class="t" style="left:1003.44px;top:150.76px;font-size:24.5px;font-weight:bold;color:#000;transform:scaleX(0.9796);">pro Div</span>
<div style="left:1118.5px;top:150.5px;width:63.0px;height:27.0px;box-sizing:border-box;border-style:solid;border-width:3.50px 3.50px 3.75px 3.75px;border-color:#a6a6a6 #bdbdbd #bdbdbd #a6a6a6;"></div>
<div style="left:1122.2px;top:154.0px;width:55.8px;height:19.8px;box-sizing:border-box;border-style:solid;border-width:3.50px 3.50px 3.75px 3.75px;border-color:#8b8b8b #c2c2c2 #c2c2c2 #8b8b8b;background:#ff0000;"></div>
<span class="t" style="left:1186.01px;top:150.76px;font-size:24.5px;font-weight:bold;color:#000;transform:scaleX(0.9362);">Kanal 2 (rechts)</span>
<div style="left:1402.0px;top:150.0px;width:26.5px;height:26.0px;border-radius:5px;background:#1068c9;"><svg width="26.5" height="26.0" viewBox="0 0 26 26" style="position:absolute;left:0;top:0"><path d="M6.6 13.4L10.9 17L19.6 8.6" stroke="#d8ecff" stroke-width="1.7" fill="none" stroke-linecap="round" stroke-linejoin="round"/></svg></div>
<div style="left:1437.5px;top:140.0px;width:107.0px;height:47.5px;box-sizing:border-box;border-style:solid;border-width:3.00px 3.75px 3.75px 3.50px;border-color:#a6a6a6 #bdbdbd #bdbdbd #a6a6a6;"></div>
<div style="left:1441.0px;top:143.0px;width:99.8px;height:40.8px;box-sizing:border-box;border-style:solid;border-width:3.00px 3.75px 3.75px 3.50px;border-color:#8b8b8b #c2c2c2 #c2c2c2 #8b8b8b;background:#d9d9d9;"></div>
<span class="t" style="left:1466.49px;top:150.76px;font-size:24.5px;font-weight:bold;color:#000;transform:scaleX(1.0288);">100m</span>
<span class="t" style="left:1551.94px;top:150.76px;font-size:24.5px;font-weight:bold;color:#000;transform:scaleX(0.9796);">pro Div</span>
<div style="left:570.0px;top:198.0px;width:1081.0px;height:900.0px;background:linear-gradient(90deg,#c6c6c6 0px,#d2d2d2 5px,#d4d4d4 16px,#cdcdcd 22px,#c1c1c1 28px,#c1c1c1 1052px,#b4b4b4 1060px,#a0a0a0 1070px,#8c8c8c 1077px,#6a6a6a 1078.5px,#6a6a6a 1080px);"></div>
<div style="left:570.0px;top:198.0px;width:1080.0px;height:9.0px;background:linear-gradient(180deg,#d6d6d6 0,#d4d4d4 4px,#c1c1c1 9px);clip-path:polygon(0 0,100% 0,calc(100% - 9px) 100%,9px 100%);"></div>
<div style="left:572.0px;top:1091.0px;width:1078.0px;height:7.0px;background:linear-gradient(180deg,#c1c1c1 0,#cecece 2px,#c4c4c4 4px,#8e8e8e 5px,#888 7px);clip-path:polygon(6px 0,calc(100% - 7px) 0,100% 100%,0 100%);"></div>
<svg style="position:absolute;left:618px;top:216px;background:#000" width="978" height="801"><path d="M125.0 3V801M246.6 3V801M368.2 3V801M489.8 3V801M611.4 3V801M733.0 3V801M854.6 3V801M3 82.6H978M3 162.2H978M3 241.8H978M3 321.4H978M3 401.0H978M3 480.6H978M3 560.2H978M3 639.8H978M3 719.4H978" stroke="#156815" stroke-width="2" fill="none"/><path d="M3 400.8H978" stroke="#2a7a2a" stroke-width="2" stroke-dasharray="3 3" fill="none"/><path d="M2.3 521.3L4.3 518.2L6.3 515.0L8.3 511.7L10.3 508.3L12.3 504.7L14.3 501.1L16.3 497.3L18.3 493.4L20.3 489.5L22.3 485.4L24.3 481.3L26.3 477.0L28.3 472.7L30.3 468.3L32.3 463.9L34.3 459.3L36.3 454.7L38.3 450.1L40.3 445.4L42.3 440.6L44.3 435.9L46.3 431.0L48.3 426.2L50.3 421.3L52.3 416.4L54.3 411.4L56.3 406.5L58.3 401.5L60.3 396.6L62.3 391.6L64.3 386.7L66.3 381.8L68.3 376.9L70.3 372.0L72.3 367.2L74.3 362.3L76.3 357.6L78.3 352.8L80.3 348.2L82.3 343.5L84.3 339.0L86.3 334.5L88.3 330.1L90.3 325.7L92.3 321.4L94.3 317.2L96.3 313.1L98.3 309.1L100.3 305.2L102.3 301.4L104.3 297.7L106.3 294.1L108.3 290.6L110.3 287.2L112.3 284.0L114.3 280.8L116.3 277.8L118.3 274.9L120.3 272.2L122.3 269.6L124.3 267.1L126.3 264.8L128.3 262.6L130.3 260.6L132.3 258.7L134.3 256.9L136.3 255.3L138.3 253.9L140.3 252.6L142.3 251.5L144.3 250.5L146.3 249.7L148.3 249.0L150.3 248.5L152.3 248.2L154.3 248.0L156.3 248.0L158.3 248.2L160.3 248.5L162.3 248.9L164.3 249.6L166.3 250.3L168.3 251.3L170.3 252.4L172.3 253.7L174.3 255.1L176.3 256.6L178.3 258.4L180.3 260.2L182.3 262.2L184.3 264.4L186.3 266.7L188.3 269.2L190.3 271.7L192.3 274.5L194.3 277.3L196.3 280.3L198.3 283.4L200.3 286.6L202.3 290.0L204.3 293.5L206.3 297.0L208.3 300.7L210.3 304.5L212.3 308.4L214.3 312.4L216.3 316.5L218.3 320.7L220.3 325.0L222.3 329.3L224.3 333.7L226.3 338.2L228.3 342.7L230.3 347.4L232.3 352.0L234.3 356.7L236.3 361.5L238.3 366.3L240.3 371.2L242.3 376.0L244.3 380.9L246.3 385.8L248.3 390.8L250.3 395.7L252.3 400.7L254.3 405.6L256.3 410.6L258.3 415.5L260.3 420.4L262.3 425.3L264.3 430.2L266.3 435.0L268.3 439.8L270.3 444.6L272.3 449.3L274.3 453.9L276.3 458.5L278.3 463.1L280.3 467.6L282.3 472.0L284.3 476.3L286.3 480.5L288.3 484.7L290.3 488.8L292.3 492.8L294.3 496.6L296.3 500.4L298.3 504.1L300.3 507.7L302.3 511.1L304.3 514.5L306.3 517.7L308.3 520.8L310.3 523.7L312.3 526.6L314.3 529.3L316.3 531.8L318.3 534.2L320.3 536.5L322.3 538.7L324.3 540.7L326.3 542.5L328.3 544.2L330.3 545.8L332.3 547.1L334.3 548.4L336.3 549.5L338.3 550.4L340.3 551.1L342.3 551.7L344.3 552.2L346.3 552.5L348.3 552.6L350.3 552.6L352.3 552.4L354.3 552.0L356.3 551.5L358.3 550.8L360.3 550.0L362.3 549.0L364.3 547.8L366.3 546.5L368.3 545.0L370.3 543.4L372.3 541.7L374.3 539.7L376.3 537.7L378.3 535.5L380.3 533.1L382.3 530.6L384.3 528.0L386.3 525.2L388.3 522.3L390.3 519.3L392.3 516.2L394.3 512.9L396.3 509.5L398.3 506.0L400.3 502.4L402.3 498.6L404.3 494.8L406.3 490.9L408.3 486.9L410.3 482.7L412.3 478.5L414.3 474.2L416.3 469.9L418.3 465.4L420.3 460.9L422.3 456.4L424.3 451.7L426.3 447.0L428.3 442.3L430.3 437.5L432.3 432.7L434.3 427.9L436.3 423.0L438.3 418.1L440.3 413.2L442.3 408.2L444.3 403.3L446.3 398.3L448.3 393.4L450.3 388.4L452.3 383.5L454.3 378.6L456.3 373.7L458.3 368.9L460.3 364.0L462.3 359.2L464.3 354.5L466.3 349.8L468.3 345.2L470.3 340.6L472.3 336.1L474.3 331.6L476.3 327.2L478.3 322.9L480.3 318.7L482.3 314.6L484.3 310.5L486.3 306.6L488.3 302.7L490.3 299.0L492.3 295.3L494.3 291.8L496.3 288.4L498.3 285.1L500.3 281.9L502.3 278.9L504.3 275.9L506.3 273.1L508.3 270.5L510.3 268.0L512.3 265.6L514.3 263.4L516.3 261.3L518.3 259.3L520.3 257.5L522.3 255.9L524.3 254.4L526.3 253.0L528.3 251.9L530.3 250.8L532.3 250.0L534.3 249.2L536.3 248.7L538.3 248.3L540.3 248.1L542.3 248.0L544.3 248.1L546.3 248.3L548.3 248.8L550.3 249.3L552.3 250.1L554.3 250.9L556.3 252.0L558.3 253.2L560.3 254.6L562.3 256.1L564.3 257.7L566.3 259.6L568.3 261.5L570.3 263.6L572.3 265.9L574.3 268.3L576.3 270.8L578.3 273.5L580.3 276.3L582.3 279.2L584.3 282.3L586.3 285.5L588.3 288.8L590.3 292.2L592.3 295.8L594.3 299.4L596.3 303.2L598.3 307.1L600.3 311.0L602.3 315.1L604.3 319.2L606.3 323.5L608.3 327.8L610.3 332.2L612.3 336.6L614.3 341.1L616.3 345.7L618.3 350.4L620.3 355.1L622.3 359.8L624.3 364.6L626.3 369.5L628.3 374.3L630.3 379.2L632.3 384.1L634.3 389.1L636.3 394.0L638.3 398.9L640.3 403.9L642.3 408.8L644.3 413.8L646.3 418.7L648.3 423.6L650.3 428.5L652.3 433.3L654.3 438.1L656.3 442.9L658.3 447.6L660.3 452.3L662.3 456.9L664.3 461.5L666.3 466.0L668.3 470.4L670.3 474.8L672.3 479.1L674.3 483.3L676.3 487.4L678.3 491.4L680.3 495.3L682.3 499.1L684.3 502.8L686.3 506.4L688.3 509.9L690.3 513.3L692.3 516.6L694.3 519.7L696.3 522.7L698.3 525.6L700.3 528.3L702.3 530.9L704.3 533.4L706.3 535.7L708.3 537.9L710.3 540.0L712.3 541.9L714.3 543.6L716.3 545.2L718.3 546.7L720.3 548.0L722.3 549.1L724.3 550.1L726.3 550.9L728.3 551.6L730.3 552.1L732.3 552.4L734.3 552.6L736.3 552.6L738.3 552.4L740.3 552.1L742.3 551.7L744.3 551.1L746.3 550.3L748.3 549.3L750.3 548.2L752.3 547.0L754.3 545.6L756.3 544.0L758.3 542.3L760.3 540.4L762.3 538.4L764.3 536.3L766.3 534.0L768.3 531.5L770.3 528.9L772.3 526.2L774.3 523.4L776.3 520.4L778.3 517.3L780.3 514.0L782.3 510.7L784.3 507.2L786.3 503.6L788.3 500.0L790.3 496.2L792.3 492.3L794.3 488.3L796.3 484.2L798.3 480.0L800.3 475.8L802.3 471.4L804.3 467.0L806.3 462.5L808.3 458.0L810.3 453.4L812.3 448.7L814.3 444.0L816.3 439.2L818.3 434.4L820.3 429.6L822.3 424.7L824.3 419.8L826.3 414.9L828.3 409.9L830.3 405.0L832.3 400.1L834.3 395.1L836.3 390.2L838.3 385.2L840.3 380.3L842.3 375.4L844.3 370.5L846.3 365.7L848.3 360.9L850.3 356.2L852.3 351.4L854.3 346.8L856.3 342.2L858.3 337.6L860.3 333.2L862.3 328.7L864.3 324.4L866.3 320.2L868.3 316.0L870.3 311.9L872.3 307.9L874.3 304.1L876.3 300.3L878.3 296.6L880.3 293.0L882.3 289.6L884.3 286.2L886.3 283.0L888.3 279.9L890.3 276.9L892.3 274.1L894.3 271.4L896.3 268.8L898.3 266.4L900.3 264.1L902.3 262.0L904.3 260.0L906.3 258.1L908.3 256.4L910.3 254.9L912.3 253.5L914.3 252.3L916.3 251.2L918.3 250.2L920.3 249.5L922.3 248.9L924.3 248.4L926.3 248.1L928.3 248.0L930.3 248.0L932.3 248.2L934.3 248.6L936.3 249.1L938.3 249.8L940.3 250.6L942.3 251.6L944.3 252.8L946.3 254.1L948.3 255.5L950.3 257.1L952.3 258.9L954.3 260.8L956.3 262.9L958.3 265.1L960.3 267.4L962.3 269.9L964.3 272.5L966.3 275.3L968.3 278.2L970.3 281.2L972.3 284.4L974.3 287.6L976.3 291.0" stroke="#ff1010" stroke-width="1.6" fill="none"/><path d="M2.3 523.8L4.3 520.6L6.3 517.4L8.3 514.0L10.3 510.5L12.3 506.9L14.3 503.1L16.3 499.3L18.3 495.3L20.3 491.3L22.3 487.2L24.3 482.9L26.3 478.6L28.3 474.2L30.3 469.7L32.3 465.2L34.3 460.5L36.3 455.9L38.3 451.1L40.3 446.3L42.3 441.5L44.3 436.6L46.3 431.6L48.3 426.7L50.3 421.7L52.3 416.7L54.3 411.7L56.3 406.6L58.3 401.6L60.3 396.5L62.3 391.5L64.3 386.4L66.3 381.4L68.3 376.4L70.3 371.4L72.3 366.5L74.3 361.6L76.3 356.7L78.3 351.9L80.3 347.1L82.3 342.4L84.3 337.7L86.3 333.2L88.3 328.6L90.3 324.2L92.3 319.8L94.3 315.6L96.3 311.4L98.3 307.3L100.3 303.3L102.3 299.4L104.3 295.6L106.3 291.9L108.3 288.4L110.3 284.9L112.3 281.6L114.3 278.4L116.3 275.3L118.3 272.4L120.3 269.6L122.3 266.9L124.3 264.4L126.3 262.0L128.3 259.8L130.3 257.7L132.3 255.8L134.3 254.0L136.3 252.4L138.3 250.9L140.3 249.6L142.3 248.4L144.3 247.5L146.3 246.6L148.3 246.0L150.3 245.4L152.3 245.1L154.3 244.9L156.3 244.9L158.3 245.1L160.3 245.4L162.3 245.9L164.3 246.5L166.3 247.3L168.3 248.3L170.3 249.4L172.3 250.7L174.3 252.1L176.3 253.7L178.3 255.5L180.3 257.4L182.3 259.4L184.3 261.6L186.3 264.0L188.3 266.5L190.3 269.1L192.3 271.9L194.3 274.8L196.3 277.9L198.3 281.0L200.3 284.3L202.3 287.7L204.3 291.3L206.3 294.9L208.3 298.7L210.3 302.6L212.3 306.6L214.3 310.6L216.3 314.8L218.3 319.1L220.3 323.4L222.3 327.8L224.3 332.4L226.3 336.9L228.3 341.6L230.3 346.3L232.3 351.0L234.3 355.9L236.3 360.7L238.3 365.6L240.3 370.6L242.3 375.5L244.3 380.5L246.3 385.6L248.3 390.6L250.3 395.6L252.3 400.7L254.3 405.7L256.3 410.8L258.3 415.8L260.3 420.8L262.3 425.8L264.3 430.8L266.3 435.7L268.3 440.6L270.3 445.5L272.3 450.3L274.3 455.0L276.3 459.7L278.3 464.4L280.3 468.9L282.3 473.4L284.3 477.8L286.3 482.2L288.3 486.4L290.3 490.6L292.3 494.6L294.3 498.6L296.3 502.5L298.3 506.2L300.3 509.8L302.3 513.4L304.3 516.8L306.3 520.1L308.3 523.2L310.3 526.2L312.3 529.1L314.3 531.9L316.3 534.5L318.3 537.0L320.3 539.3L322.3 541.5L324.3 543.5L326.3 545.4L328.3 547.1L330.3 548.7L332.3 550.1L334.3 551.4L336.3 552.5L338.3 553.4L340.3 554.2L342.3 554.8L344.3 555.3L346.3 555.6L348.3 555.7L350.3 555.7L352.3 555.5L354.3 555.1L356.3 554.6L358.3 553.9L360.3 553.0L362.3 552.0L364.3 550.8L366.3 549.5L368.3 548.0L370.3 546.3L372.3 544.5L374.3 542.6L376.3 540.5L378.3 538.2L380.3 535.8L382.3 533.3L384.3 530.6L386.3 527.8L388.3 524.8L390.3 521.7L392.3 518.5L394.3 515.2L396.3 511.7L398.3 508.1L400.3 504.4L402.3 500.6L404.3 496.7L406.3 492.7L408.3 488.6L410.3 484.4L412.3 480.1L414.3 475.7L416.3 471.3L418.3 466.8L420.3 462.2L422.3 457.5L424.3 452.8L426.3 448.0L428.3 443.2L430.3 438.3L432.3 433.4L434.3 428.4L436.3 423.4L438.3 418.4L440.3 413.4L442.3 408.4L444.3 403.3L446.3 398.3L448.3 393.2L450.3 388.2L452.3 383.2L454.3 378.2L456.3 373.2L458.3 368.2L460.3 363.3L462.3 358.4L464.3 353.6L466.3 348.8L468.3 344.0L470.3 339.4L472.3 334.7L474.3 330.2L476.3 325.7L478.3 321.3L480.3 317.0L482.3 312.8L484.3 308.7L486.3 304.7L488.3 300.7L490.3 296.9L492.3 293.2L494.3 289.6L496.3 286.1L498.3 282.7L500.3 279.5L502.3 276.4L504.3 273.4L506.3 270.6L508.3 267.9L510.3 265.3L512.3 262.9L514.3 260.6L516.3 258.4L518.3 256.4L520.3 254.6L522.3 252.9L524.3 251.4L526.3 250.0L528.3 248.8L530.3 247.8L532.3 246.9L534.3 246.2L536.3 245.6L538.3 245.2L540.3 245.0L542.3 244.9L544.3 245.0L546.3 245.2L548.3 245.7L550.3 246.3L552.3 247.0L554.3 247.9L556.3 249.0L558.3 250.2L560.3 251.6L562.3 253.1L564.3 254.8L566.3 256.7L568.3 258.7L570.3 260.8L572.3 263.1L574.3 265.6L576.3 268.2L578.3 270.9L580.3 273.8L582.3 276.8L584.3 279.9L586.3 283.2L588.3 286.5L590.3 290.0L592.3 293.7L594.3 297.4L596.3 301.2L598.3 305.2L600.3 309.2L602.3 313.3L604.3 317.6L606.3 321.9L608.3 326.3L610.3 330.8L612.3 335.3L614.3 339.9L616.3 344.6L618.3 349.4L620.3 354.2L622.3 359.0L624.3 363.9L626.3 368.8L628.3 373.8L630.3 378.8L632.3 383.8L634.3 388.8L636.3 393.9L638.3 398.9L640.3 404.0L642.3 409.0L644.3 414.0L646.3 419.1L648.3 424.1L650.3 429.0L652.3 434.0L654.3 438.9L656.3 443.8L658.3 448.6L660.3 453.4L662.3 458.1L664.3 462.7L666.3 467.3L668.3 471.9L670.3 476.3L672.3 480.7L674.3 484.9L676.3 489.1L678.3 493.2L680.3 497.2L682.3 501.1L684.3 504.9L686.3 508.6L688.3 512.2L690.3 515.6L692.3 518.9L694.3 522.1L696.3 525.2L698.3 528.1L700.3 530.9L702.3 533.6L704.3 536.1L706.3 538.5L708.3 540.7L710.3 542.8L712.3 544.8L714.3 546.6L716.3 548.2L718.3 549.7L720.3 551.0L722.3 552.1L724.3 553.1L726.3 554.0L728.3 554.6L730.3 555.1L732.3 555.5L734.3 555.7L736.3 555.7L738.3 555.5L740.3 555.2L742.3 554.8L744.3 554.1L746.3 553.3L748.3 552.4L750.3 551.2L752.3 550.0L754.3 548.5L756.3 546.9L758.3 545.2L760.3 543.3L762.3 541.2L764.3 539.0L766.3 536.7L768.3 534.2L770.3 531.5L772.3 528.8L774.3 525.9L776.3 522.8L778.3 519.7L780.3 516.4L782.3 512.9L784.3 509.4L786.3 505.7L788.3 502.0L790.3 498.1L792.3 494.1L794.3 490.1L796.3 485.9L798.3 481.6L800.3 477.3L802.3 472.9L804.3 468.4L806.3 463.8L808.3 459.1L810.3 454.4L812.3 449.7L814.3 444.9L816.3 440.0L818.3 435.1L820.3 430.2L822.3 425.2L824.3 420.2L826.3 415.2L828.3 410.1L830.3 405.1L832.3 400.0L834.3 395.0L836.3 390.0L838.3 384.9L840.3 379.9L842.3 374.9L844.3 369.9L846.3 365.0L848.3 360.1L850.3 355.3L852.3 350.4L854.3 345.7L856.3 341.0L858.3 336.4L860.3 331.8L862.3 327.3L864.3 322.9L866.3 318.5L868.3 314.3L870.3 310.1L872.3 306.1L874.3 302.1L876.3 298.2L878.3 294.5L880.3 290.8L882.3 287.3L884.3 283.9L886.3 280.6L888.3 277.5L890.3 274.4L892.3 271.5L894.3 268.8L896.3 266.2L898.3 263.7L900.3 261.4L902.3 259.2L904.3 257.1L906.3 255.2L908.3 253.5L910.3 251.9L912.3 250.5L914.3 249.2L916.3 248.1L918.3 247.2L920.3 246.4L922.3 245.8L924.3 245.3L926.3 245.0L928.3 244.9L930.3 244.9L932.3 245.1L934.3 245.5L936.3 246.0L938.3 246.7L940.3 247.6L942.3 248.6L944.3 249.8L946.3 251.1L948.3 252.6L950.3 254.2L952.3 256.0L954.3 258.0L956.3 260.1L958.3 262.3L960.3 264.7L962.3 267.3L964.3 269.9L966.3 272.8L968.3 275.7L970.3 278.8L972.3 282.0L974.3 285.3L976.3 288.8" stroke="#86ff1e" stroke-width="1.6" fill="none"/><g transform="translate(63 393)" fill="#ffe23a"><rect x="-15" y="-2.5" width="11" height="5" rx="2"/><rect x="4" y="-2.5" width="11" height="5" rx="2"/><rect x="-2.5" y="-15" width="5" height="11" rx="2"/><rect x="-2.5" y="4" width="5" height="11" rx="2"/><rect x="-1" y="-15" width="2" height="30"/><rect x="-15" y="-1" width="30" height="2"/></g></svg>
<span class="t" style="left:644.60px;top:243.18px;font-size:24px;font-weight:bold;color:#fff;transform:scaleX(1.1068);">f</span>
<span class="t" style="left:665.88px;top:243.18px;font-size:24px;font-weight:bold;color:#62f60e;transform:scaleX(1.0347);">315,09</span>
<span class="t" style="left:751.32px;top:243.18px;font-size:24px;font-weight:bold;color:#fff;transform:scaleX(1.0789);">Hz</span>
<span class="t" style="left:809.38px;top:243.18px;font-size:24px;font-weight:bold;color:#ff1414;transform:scaleX(1.0347);">315,09</span>
<span class="t" style="left:896.38px;top:243.18px;font-size:24px;font-weight:bold;color:#fff;transform:scaleX(1.0417);">Hz</span>
<span class="t" style="left:970.89px;top:243.18px;font-size:24px;font-weight:bold;color:#fff;transform:scaleX(0.9224);">V</span>
<span class="t" style="left:991.34px;top:246.18px;font-size:24px;font-weight:bold;color:#fff;transform:scaleX(1.0632);">p-p</span>
<span class="t" style="left:1050.88px;top:243.18px;font-size:24px;font-weight:bold;color:#62f60e;transform:scaleX(1.0322);">391,5m</span>
<span class="t" style="left:1163.38px;top:243.18px;font-size:24px;font-weight:bold;color:#ff1414;transform:scaleX(1.0322);">384,2m</span>
<span class="t" style="left:1298.39px;top:243.18px;font-size:24px;font-weight:bold;color:#fff;transform:scaleX(0.9542);">V</span>
<span class="t" style="left:1319.90px;top:245.18px;font-size:24px;font-weight:bold;color:#fff;transform:scaleX(1.1428);">eff</span>
<span class="t" style="left:1373.03px;top:243.18px;font-size:24px;font-weight:bold;color:#62f60e;transform:scaleX(1.0242);">138,3m</span>
<span class="t" style="left:1485.00px;top:243.18px;font-size:24px;font-weight:bold;color:#ff1414;transform:scaleX(1.0433);">135,8m</span>
<svg style="position:absolute;left:600px;top:1019.6px" width="1010" height="12"><path d="M20.9 0V10M33.1 0V6M45.2 0V6M57.4 0V6M69.5 0V6M81.7 0V6M93.9 0V6M106.0 0V6M118.2 0V6M130.3 0V6M142.5 0V10M154.7 0V6M166.8 0V6M179.0 0V6M191.1 0V6M203.3 0V6M215.5 0V6M227.6 0V6M239.8 0V6M251.9 0V6M264.1 0V10M276.3 0V6M288.4 0V6M300.6 0V6M312.7 0V6M324.9 0V6M337.1 0V6M349.2 0V6M361.4 0V6M373.5 0V6M385.7 0V10M397.9 0V6M410.0 0V6M422.2 0V6M434.3 0V6M446.5 0V6M458.7 0V6M470.8 0V6M483.0 0V6M495.1 0V6M507.3 0V10M519.5 0V6M531.6 0V6M543.8 0V6M555.9 0V6M568.1 0V6M580.3 0V6M592.4 0V6M604.6 0V6M616.7 0V6M628.9 0V10M641.1 0V6M653.2 0V6M665.4 0V6M677.5 0V6M689.7 0V6M701.9 0V6M714.0 0V6M726.2 0V6M738.3 0V6M750.5 0V10M762.7 0V6M774.8 0V6M787.0 0V6M799.1 0V6M811.3 0V6M823.5 0V6M835.6 0V6M847.8 0V6M859.9 0V6M872.1 0V10M884.3 0V6M896.4 0V6M908.6 0V6M920.7 0V6M932.9 0V6M945.1 0V6M957.2 0V6M969.4 0V6M981.5 0V6M993.7 0V10" stroke="#000" stroke-width="1.9" fill="none"/></svg>
<span class="t" style="left:612.29px;top:1034.53px;font-size:23px;font-weight:bold;color:#000;transform:scaleX(1.0984);">0</span>
<span class="t" style="left:724.08px;top:1034.53px;font-size:23px;font-weight:bold;color:#000;transform:scaleX(1.1025);">1m</span>
<span class="t" style="left:846.33px;top:1034.53px;font-size:23px;font-weight:bold;color:#000;transform:scaleX(1.0821);">2m</span>
<span class="t" style="left:968.18px;top:1034.53px;font-size:23px;font-weight:bold;color:#000;transform:scaleX(1.0742);">3m</span>
<span class="t" style="left:1090.03px;top:1034.53px;font-size:23px;font-weight:bold;color:#000;transform:scaleX(1.0663);">4m</span>
<span class="t" style="left:1211.26px;top:1034.53px;font-size:23px;font-weight:bold;color:#000;transform:scaleX(1.0781);">5m</span>
<span class="t" style="left:1332.73px;top:1034.53px;font-size:23px;font-weight:bold;color:#000;transform:scaleX(1.0821);">6m</span>
<span class="t" style="left:1454.20px;top:1034.53px;font-size:23px;font-weight:bold;color:#000;transform:scaleX(1.0861);">7m</span>
<span class="t" style="left:1576.06px;top:1034.53px;font-size:23px;font-weight:bold;color:#000;transform:scaleX(1.0781);">8m</span>
<span class="t" style="left:1074.80px;top:1067.34px;font-size:25px;font-weight:bold;color:#000;transform:scaleX(0.9327);">Zeit [s]</span>
<span class="t" style="left:1444.48px;top:1064.84px;font-size:25px;font-weight:bold;color:#000;transform:scaleX(1.0172);">Gitter</span>
<div style="left:1524.0px;top:1064.0px;width:26.5px;height:26.0px;border-radius:5px;background:#1068c9;"><svg width="26.5" height="26.0" viewBox="0 0 26 26" style="position:absolute;left:0;top:0"><path d="M6.6 13.4L10.9 17L19.6 8.6" stroke="#d8ecff" stroke-width="1.7" fill="none" stroke-linecap="round" stroke-linejoin="round"/></svg></div>
<div style="left:1558.5px;top:1065.0px;width:64.0px;height:27.0px;box-sizing:border-box;border-style:solid;border-width:3.50px 4.25px 4.00px 3.75px;border-color:#a6a6a6 #bdbdbd #bdbdbd #a6a6a6;"></div>
<div style="left:1562.2px;top:1068.5px;width:56.0px;height:19.5px;box-sizing:border-box;border-style:solid;border-width:3.50px 4.25px 4.00px 3.75px;border-color:#8b8b8b #c2c2c2 #c2c2c2 #8b8b8b;background:#0f6200;"></div>
<span class="t" style="left:620.00px;top:1102.84px;font-size:25px;font-weight:bold;color:#000;transform:scaleX(0.9252);">Messen</span>
<div style="left:568.5px;top:1136.5px;width:215.5px;height:42.5px;background:linear-gradient(90deg,transparent calc(100% - 9px),#a8a8a8 calc(100% - 9px),#8c8c8c calc(100% - 4px),#686868 100%),linear-gradient(180deg,transparent calc(100% - 4.5px),#9e9e9e calc(100% - 4.5px),#9a9a9a calc(100% - 2.2px),#6a6a6a calc(100% - 2.2px)),linear-gradient(180deg,#d8d8d8 0,#d6d6d6 4px,transparent 4px),linear-gradient(90deg,#d6d6d6 0,#cccccc 5px,#b6b6b6 8.5px,transparent 9px),linear-gradient(180deg,#cbcbcb 0%,#c7c7c7 40%,#bbbbbb 100%);"></div>
<svg style="position:absolute;left:742.0px;top:1154.0px" width="27.0" height="17.0" viewBox="0 0 26 17"><path d="M1 1.5H25L13 16Z" fill="#c6c6c6" stroke="none"/><path d="M1 1.5H25" stroke="#555" stroke-width="1.6" fill="none"/><path d="M1 1.5L13 16" stroke="#666" stroke-width="1.6" fill="none"/><path d="M25 1.5L13 16" stroke="#f2f2f2" stroke-width="1.8" fill="none"/></svg>
<span class="t" style="left:588.44px;top:1145.26px;font-size:24.5px;font-weight:bold;color:#1a3cf0;transform:scaleX(0.9775);">Hz und Volt</span>
<div style="left:832.0px;top:1144.0px;width:26.0px;height:26.0px;border-radius:5px;background:#1068c9;"><svg width="26.0" height="26.0" viewBox="0 0 26 26" style="position:absolute;left:0;top:0"><path d="M6.6 13.4L10.9 17L19.6 8.6" stroke="#d8ecff" stroke-width="1.7" fill="none" stroke-linecap="round" stroke-linejoin="round"/></svg></div>
<span class="t" style="left:864.47px;top:1144.84px;font-size:25px;font-weight:bold;color:#000;transform:scaleX(0.9436);">Frequenz</span>
<div style="left:1020.0px;top:1144.0px;width:26.0px;height:26.0px;border-radius:5px;background:#1068c9;"><svg width="26.0" height="26.0" viewBox="0 0 26 26" style="position:absolute;left:0;top:0"><path d="M6.6 13.4L10.9 17L19.6 8.6" stroke="#d8ecff" stroke-width="1.7" fill="none" stroke-linecap="round" stroke-linejoin="round"/></svg></div>
<span class="t" style="left:1054.82px;top:1144.84px;font-size:25px;font-weight:bold;color:#000;transform:scaleX(0.9009);">Spannung</span>
<div style="left:1186.0px;top:1144.0px;width:25.0px;height:25.0px;box-sizing:border-box;border-radius:4px;background:#f5f5f5;border:2px solid #7c7c7c;"></div>
<span class="t" style="left:1221.00px;top:1144.84px;font-size:25px;font-weight:bold;color:#000;transform:scaleX(0.9610);">Werte speichern</span>
</div></div>
<div class="win" style="left:1748px;top:22px;width:735.5px;height:1053.5px;border-radius:11px;border-color:#b8b8b8;">
<div class="abs" style="left:-1749px;top:-23px;width:1px;height:1px">
<div style="left:1748.0px;top:22.0px;width:752.0px;height:66.0px;background:#f3f3f3;"></div>
<svg style="position:absolute;left:1770px;top:38.5px" width="32" height="32" viewBox="0 0 32 32"><rect width="32" height="32" fill="#080408"/><path d="M0 16H32" stroke="#d01818" stroke-width="2"/><path d="M1 17C3 4 7 0 10 5C14 12 17 24 21 28C25 31 29 26 31 14" stroke="#28e63c" stroke-width="3.2" fill="none" stroke-linecap="round"/></svg>
<span class="t" style="left:1811.93px;top:44.18px;font-size:24.6px;font-weight:normal;color:#8c8c8c;transform:scaleX(0.9691);">Signalgenerator</span>
<svg style="position:absolute;left:2236px;top:40px" width="220" height="30" viewBox="0 0 220 30"><path d="M5.5 14H25.5" stroke="#8a8a8a" stroke-width="1.9"/><rect x="96.5" y="5" width="18.5" height="18.5" rx="2.5" fill="none" stroke="#8a8a8a" stroke-width="1.9"/><path d="M189.5 4.5L209 24M209 4.5L189.5 24" stroke="#8a8a8a" stroke-width="1.9"/></svg>
<div style="left:1762.0px;top:96.0px;width:716.0px;height:914.0px;box-sizing:border-box;border:2px solid #dedede;"></div>
<div style="left:1758.0px;top:92.0px;width:716.0px;height:914.0px;box-sizing:border-box;border:2px solid #505050;"></div>
<div style="left:1764.0px;top:780.0px;width:240.0px;height:2.0px;background:#505050;"></div>
<div style="left:1764.0px;top:784.0px;width:240.0px;height:2.0px;background:#dedede;"></div>
<div style="left:2222.0px;top:780.0px;width:250.0px;height:2.0px;background:#505050;"></div>
<div style="left:2222.0px;top:784.0px;width:250.0px;height:2.0px;background:#dedede;"></div>
<div style="left:1764.0px;top:892.5px;width:268.0px;height:2.0px;background:#505050;"></div>
<div style="left:1764.0px;top:896.5px;width:268.0px;height:2.0px;background:#dedede;"></div>
<div style="left:2206.0px;top:892.5px;width:266.0px;height:2.0px;background:#505050;"></div>
<div style="left:2206.0px;top:896.5px;width:266.0px;height:2.0px;background:#dedede;"></div>
<div style="left:2470.0px;top:786.0px;width:2.3px;height:107.0px;background:#505050;"></div>
<div style="left:2114.0px;top:94.0px;width:4.3px;height:17.5px;background:#5c5c5c;"></div>
<div style="left:2118.6px;top:94.0px;width:3.4px;height:17.5px;background:#e0e0e0;"></div>
<div style="left:2114.0px;top:152.0px;width:4.3px;height:205.5px;background:#5c5c5c;"></div>
<div style="left:2118.6px;top:152.0px;width:3.4px;height:205.5px;background:#e0e0e0;"></div>
<div style="left:2114.0px;top:398.0px;width:4.3px;height:164.0px;background:#5c5c5c;"></div>
<div style="left:2118.6px;top:398.0px;width:3.4px;height:164.0px;background:#e0e0e0;"></div>
<div style="left:2114.0px;top:602.5px;width:4.3px;height:159.5px;background:#5c5c5c;"></div>
<div style="left:2118.6px;top:602.5px;width:3.4px;height:159.5px;background:#e0e0e0;"></div>
<div style="left:2114.0px;top:802.5px;width:4.3px;height:75.0px;background:#5c5c5c;"></div>
<div style="left:2118.6px;top:802.5px;width:3.4px;height:75.0px;background:#e0e0e0;"></div>
<span class="t" style="left:1865.87px;top:118.64px;font-size:27px;font-weight:bold;color:#000;transform:scaleX(0.9299);">Kanal 1</span>
<span class="t" style="left:2283.85px;top:118.64px;font-size:27px;font-weight:bold;color:#000;transform:scaleX(0.9393);">Kanal 2</span>
<div style="left:2000.0px;top:107.0px;width:67.0px;height:51.4px;border-radius:50%;background:linear-gradient(135deg,#9a9a9a 15%,#b0b0b0 45%,#f2f2f2 88%);filter:blur(2.2px);"></div>
<div style="left:2003.0px;top:110.0px;width:61.0px;height:45.4px;box-sizing:border-box;border-radius:50%;border:2px solid #555;border-bottom-color:#1c1c1c;border-top-color:#6c6c6c;background:radial-gradient(ellipse at 12% 36%,#dedede 0%,#bcbcbc 14%,#aaaaaa 38%,#a0a0a0 65%,#a4a4a4 100%);"></div>
<svg style="position:absolute;left:2041.0px;top:119.7px;filter:blur(.8px)" width="16.5" height="24.6" viewBox="0 0 30 26" preserveAspectRatio="none"><path d="M3 2Q1 13 3 24Q16 21 27 16Q30 13 27 10Q16 5 3 2Z" fill="#62f614"/></svg>
<div style="left:2160.2px;top:107.0px;width:67.0px;height:51.4px;border-radius:50%;background:linear-gradient(135deg,#9a9a9a 15%,#b0b0b0 45%,#f2f2f2 88%);filter:blur(2.2px);"></div>
<div style="left:2163.2px;top:110.0px;width:61.0px;height:45.4px;box-sizing:border-box;border-radius:50%;border:2px solid #555;border-bottom-color:#1c1c1c;border-top-color:#6c6c6c;background:radial-gradient(ellipse at 12% 36%,#dedede 0%,#bcbcbc 14%,#aaaaaa 38%,#a0a0a0 65%,#a4a4a4 100%);"></div>
<svg style="position:absolute;left:2201.0px;top:119.7px;filter:blur(.8px)" width="16.5" height="24.6" viewBox="0 0 30 26" preserveAspectRatio="none"><path d="M3 2Q1 13 3 24Q16 21 27 16Q30 13 27 10Q16 5 3 2Z" fill="#62f614"/></svg>
<span class="t" style="left:2100.68px;top:117.45px;font-size:22.5px;font-weight:bold;color:#000;transform:scaleX(0.9013);">Ein</span>
<div style="left:1780.0px;top:172.5px;width:310.0px;height:37.5px;background:linear-gradient(90deg,transparent calc(100% - 9px),#a8a8a8 calc(100% - 9px),#8c8c8c calc(100% - 4px),#686868 100%),linear-gradient(180deg,transparent calc(100% - 4.5px),#9e9e9e calc(100% - 4.5px),#9a9a9a calc(100% - 2.2px),#6a6a6a calc(100% - 2.2px)),linear-gradient(180deg,#d8d8d8 0,#d6d6d6 4px,transparent 4px),linear-gradient(90deg,#d6d6d6 0,#cccccc 5px,#b6b6b6 8.5px,transparent 9px),linear-gradient(180deg,#cbcbcb 0%,#c7c7c7 40%,#bbbbbb 100%);"></div>
<svg style="position:absolute;left:2048.0px;top:186.0px" width="27.5" height="17.0" viewBox="0 0 26 17"><path d="M1 1.5H25L13 16Z" fill="#c6c6c6" stroke="none"/><path d="M1 1.5H25" stroke="#555" stroke-width="1.6" fill="none"/><path d="M1 1.5L13 16" stroke="#666" stroke-width="1.6" fill="none"/><path d="M25 1.5L13 16" stroke="#f2f2f2" stroke-width="1.8" fill="none"/></svg>
<span class="t" style="left:1884.38px;top:181.03px;font-size:23px;font-weight:bold;color:#2408f4;transform:scaleX(0.9024);">Sinus</span>
<div style="left:2136.0px;top:172.5px;width:316.0px;height:37.5px;background:linear-gradient(90deg,transparent calc(100% - 9px),#a8a8a8 calc(100% - 9px),#8c8c8c calc(100% - 4px),#686868 100%),linear-gradient(180deg,transparent calc(100% - 4.5px),#9e9e9e calc(100% - 4.5px),#9a9a9a calc(100% - 2.2px),#6a6a6a calc(100% - 2.2px)),linear-gradient(180deg,#d8d8d8 0,#d6d6d6 4px,transparent 4px),linear-gradient(90deg,#d6d6d6 0,#cccccc 5px,#b6b6b6 8.5px,transparent 9px),linear-gradient(180deg,#cbcbcb 0%,#c7c7c7 40%,#bbbbbb 100%);"></div>
<svg style="position:absolute;left:2410.0px;top:186.0px" width="27.0" height="17.0" viewBox="0 0 26 17"><path d="M1 1.5H25L13 16Z" fill="#c6c6c6" stroke="none"/><path d="M1 1.5H25" stroke="#555" stroke-width="1.6" fill="none"/><path d="M1 1.5L13 16" stroke="#666" stroke-width="1.6" fill="none"/><path d="M25 1.5L13 16" stroke="#f2f2f2" stroke-width="1.8" fill="none"/></svg>
<span class="t" style="left:2243.87px;top:181.03px;font-size:23px;font-weight:bold;color:#2408f4;transform:scaleX(0.9106);">Sinus</span>
<span class="t" style="left:1888.77px;top:242.41px;font-size:25.5px;font-weight:bold;color:#7e7e7e;transform:scaleX(0.9046);">Tastgrad</span>
<span class="t" style="left:2248.27px;top:242.41px;font-size:25.5px;font-weight:bold;color:#7e7e7e;transform:scaleX(0.9094);">Tastgrad</span>
<div style="left:1993.5px;top:232.5px;width:22.0px;height:46.5px;"><svg width="22.0" height="46.5" viewBox="0 0 22 46" preserveAspectRatio="none" style="position:absolute;left:0;top:0;opacity:.55;"><defs><linearGradient id="spg" x1="0" y1="0" x2="1" y2="0.35"><stop offset="0" stop-color="#f4f4f4"/><stop offset=".4" stop-color="#dadada"/><stop offset=".78" stop-color="#b4b4b4"/><stop offset="1" stop-color="#505050"/></linearGradient></defs><ellipse cx="11" cy="23" rx="10.6" ry="22.6" fill="url(#spg)"/><path d="M1 23.5H21" stroke="#8a8a8a" stroke-width="1"/><path d="M1 24.6H21" stroke="#eee" stroke-width="1"/><path d="M11 11L13.6 16.5H8.4Z" fill="#2a2a2a"/><path d="M11 35.5L13.6 30H8.4Z" fill="#2a2a2a"/></svg></div>
<div style="left:2016.0px;top:236.0px;width:48.0px;height:46.5px;box-sizing:border-box;border-style:solid;border-width:3.25px 4.00px 3.25px 3.00px;border-color:#adadad #bcbcbc #bcbcbc #adadad;"></div>
<div style="left:2019.0px;top:239.2px;width:41.0px;height:40.0px;box-sizing:border-box;border-style:solid;border-width:3.25px 4.00px 3.25px 3.00px;border-color:#a0a0a0 #c0c0c0 #c0c0c0 #a0a0a0;background:#d2d2d2;"></div>
<span class="t" style="left:2026.59px;top:249.38px;font-size:22px;font-weight:normal;color:#8a8a8a;transform:scaleX(1.0321);">50</span>
<span class="t" style="left:2064.96px;top:245.38px;font-size:22px;font-weight:bold;color:#000;transform:scaleX(0.9740);">%</span>
<div style="left:2357.5px;top:232.5px;width:21.5px;height:46.5px;"><svg width="21.5" height="46.5" viewBox="0 0 22 46" preserveAspectRatio="none" style="position:absolute;left:0;top:0;opacity:.55;"><defs><linearGradient id="spg" x1="0" y1="0" x2="1" y2="0.35"><stop offset="0" stop-color="#f4f4f4"/><stop offset=".4" stop-color="#dadada"/><stop offset=".78" stop-color="#b4b4b4"/><stop offset="1" stop-color="#505050"/></linearGradient></defs><ellipse cx="11" cy="23" rx="10.6" ry="22.6" fill="url(#spg)"/><path d="M1 23.5H21" stroke="#8a8a8a" stroke-width="1"/><path d="M1 24.6H21" stroke="#eee" stroke-width="1"/><path d="M11 11L13.6 16.5H8.4Z" fill="#2a2a2a"/><path d="M11 35.5L13.6 30H8.4Z" fill="#2a2a2a"/></svg></div>
<div style="left:2380.0px;top:236.0px;width:48.0px;height:46.5px;box-sizing:border-box;border-style:solid;border-width:3.25px 3.75px 3.25px 3.00px;border-color:#adadad #bcbcbc #bcbcbc #adadad;"></div>
<div style="left:2383.0px;top:239.2px;width:41.2px;height:40.0px;box-sizing:border-box;border-style:solid;border-width:3.25px 3.75px 3.25px 3.00px;border-color:#a0a0a0 #c0c0c0 #c0c0c0 #a0a0a0;background:#d2d2d2;"></div>
<span class="t" style="left:2390.11px;top:249.38px;font-size:22px;font-weight:normal;color:#8a8a8a;transform:scaleX(1.0101);">50</span>
<span class="t" style="left:2428.96px;top:245.38px;font-size:22px;font-weight:bold;color:#000;transform:scaleX(0.9740);">%</span>
<div style="left:1878.5px;top:358.0px;width:104.0px;height:104.0px;border-radius:50%;background:linear-gradient(135deg,#8a8a8a 14%,#989898 38%,#a8a8a8 56%,#d2d2d2 72%,#ffffff 86%);filter:blur(1.5px);"></div>
<div style="left:1887.5px;top:367.0px;width:84.0px;height:84.0px;border-radius:50%;background:radial-gradient(circle at 33% 29%,#f8f8f8 0%,#e0e0e0 6%,#cdcdcd 20%,#bbbbbb 40%,#a0a0a0 57%,#7e7e7e 69%,#5a5a5a 79%);"></div>
<svg style="position:absolute;left:0;top:0;overflow:visible" width="1" height="1"><path d="M1906.4 362.8L1901.0 352.1M1954.6 362.8L1960.0 352.1M1877.2 401.6L1866.3 399.8M1983.8 401.6L1994.7 399.8M1891.6 448.9L1883.1 457.4M1969.4 448.9L1977.9 457.4" stroke="#151515" stroke-width="1.9" fill="none"/><path d="M1902.5 430L1922 416" stroke="#2152e0" stroke-width="2.6" fill="none"/></svg>
<span class="t" style="left:1874.53px;top:322.03px;font-size:23px;font-weight:bold;color:#000;transform:scaleX(1.0506);">0,4</span>
<span class="t" style="left:1952.51px;top:322.03px;font-size:23px;font-weight:bold;color:#000;transform:scaleX(1.0746);">0,6</span>
<span class="t" style="left:1828.04px;top:386.03px;font-size:23px;font-weight:bold;color:#000;transform:scaleX(1.0455);">0,2</span>
<span class="t" style="left:1999.55px;top:386.03px;font-size:23px;font-weight:bold;color:#000;transform:scaleX(1.0375);">0,8</span>
<span class="t" style="left:1867.12px;top:456.03px;font-size:23px;font-weight:bold;color:#000;transform:scaleX(0.9611);">0</span>
<span class="t" style="left:1981.85px;top:456.03px;font-size:23px;font-weight:bold;color:#000;transform:scaleX(0.8326);">1</span>
<div style="left:1868.5px;top:478.5px;width:23.0px;height:47.0px;"><svg width="23.0" height="47.0" viewBox="0 0 22 46" preserveAspectRatio="none" style="position:absolute;left:0;top:0;"><defs><linearGradient id="spg" x1="0" y1="0" x2="1" y2="0.35"><stop offset="0" stop-color="#f4f4f4"/><stop offset=".4" stop-color="#dadada"/><stop offset=".78" stop-color="#b4b4b4"/><stop offset="1" stop-color="#505050"/></linearGradient></defs><ellipse cx="11" cy="23" rx="10.6" ry="22.6" fill="url(#spg)"/><path d="M1 23.5H21" stroke="#8a8a8a" stroke-width="1"/><path d="M1 24.6H21" stroke="#eee" stroke-width="1"/><path d="M11 11L13.6 16.5H8.4Z" fill="#2a2a2a"/><path d="M11 35.5L13.6 30H8.4Z" fill="#2a2a2a"/></svg></div>
<div style="left:1892.5px;top:482.0px;width:83.0px;height:47.0px;box-sizing:border-box;border-style:solid;border-width:3.25px 3.75px 3.75px 2.75px;border-color:#a6a6a6 #bdbdbd #bdbdbd #a6a6a6;"></div>
<div style="left:1895.2px;top:485.2px;width:76.5px;height:40.0px;box-sizing:border-box;border-style:solid;border-width:3.25px 3.75px 3.75px 2.75px;border-color:#8b8b8b #c2c2c2 #c2c2c2 #8b8b8b;background:#fff;"></div>
<span class="t" style="left:1902.13px;top:494.53px;font-size:23px;font-weight:normal;color:#000;transform:scaleX(0.9432);">0,035</span>
<div style="left:2249.0px;top:356.5px;width:104.0px;height:104.0px;border-radius:50%;background:linear-gradient(135deg,#8a8a8a 14%,#989898 38%,#a8a8a8 56%,#d2d2d2 72%,#ffffff 86%);filter:blur(1.5px);"></div>
<div style="left:2258.0px;top:365.5px;width:84.0px;height:84.0px;border-radius:50%;background:radial-gradient(circle at 33% 29%,#f8f8f8 0%,#e0e0e0 6%,#cdcdcd 20%,#bbbbbb 40%,#a0a0a0 57%,#7e7e7e 69%,#5a5a5a 79%);"></div>
<svg style="position:absolute;left:0;top:0;overflow:visible" width="1" height="1"><path d="M2276.9 361.3L2271.5 350.6M2325.1 361.3L2330.5 350.6M2247.7 400.1L2236.8 398.3M2354.3 400.1L2365.2 398.3M2262.1 447.4L2253.6 455.9M2339.9 447.4L2348.4 455.9" stroke="#151515" stroke-width="1.9" fill="none"/><path d="M2272.5 430.5L2291 414.5" stroke="#2152e0" stroke-width="2.6" fill="none"/></svg>
<span class="t" style="left:2244.55px;top:320.03px;font-size:23px;font-weight:bold;color:#000;transform:scaleX(1.0344);">0,4</span>
<span class="t" style="left:2322.51px;top:320.03px;font-size:23px;font-weight:bold;color:#000;transform:scaleX(1.0746);">0,6</span>
<span class="t" style="left:2198.55px;top:384.03px;font-size:23px;font-weight:bold;color:#000;transform:scaleX(1.0289);">0,2</span>
<span class="t" style="left:2368.52px;top:384.03px;font-size:23px;font-weight:bold;color:#000;transform:scaleX(1.0705);">0,8</span>
<span class="t" style="left:2236.53px;top:453.53px;font-size:23px;font-weight:bold;color:#000;transform:scaleX(1.0526);">0</span>
<span class="t" style="left:2352.48px;top:453.53px;font-size:23px;font-weight:bold;color:#000;transform:scaleX(0.7401);">1</span>
<div style="left:2238.5px;top:478.5px;width:22.5px;height:47.0px;"><svg width="22.5" height="47.0" viewBox="0 0 22 46" preserveAspectRatio="none" style="position:absolute;left:0;top:0;"><defs><linearGradient id="spg" x1="0" y1="0" x2="1" y2="0.35"><stop offset="0" stop-color="#f4f4f4"/><stop offset=".4" stop-color="#dadada"/><stop offset=".78" stop-color="#b4b4b4"/><stop offset="1" stop-color="#505050"/></linearGradient></defs><ellipse cx="11" cy="23" rx="10.6" ry="22.6" fill="url(#spg)"/><path d="M1 23.5H21" stroke="#8a8a8a" stroke-width="1"/><path d="M1 24.6H21" stroke="#eee" stroke-width="1"/><path d="M11 11L13.6 16.5H8.4Z" fill="#2a2a2a"/><path d="M11 35.5L13.6 30H8.4Z" fill="#2a2a2a"/></svg></div>
<div style="left:2261.5px;top:481.0px;width:85.0px;height:47.5px;box-sizing:border-box;border-style:solid;border-width:3.50px 4.00px 3.50px 3.00px;border-color:#a6a6a6 #bdbdbd #bdbdbd #a6a6a6;"></div>
<div style="left:2264.5px;top:484.5px;width:78.0px;height:40.5px;box-sizing:border-box;border-style:solid;border-width:3.50px 4.00px 3.50px 3.00px;border-color:#8b8b8b #c2c2c2 #c2c2c2 #8b8b8b;background:#fff;"></div>
<span class="t" style="left:2272.13px;top:494.03px;font-size:23px;font-weight:normal;color:#000;transform:scaleX(0.9432);">0,035</span>
<span class="t" style="left:2058.43px;top:362.18px;font-size:24px;font-weight:bold;color:#000;transform:scaleX(0.9436);">Amplitude</span>
<span class="t" style="left:2067.09px;top:566.18px;font-size:24px;font-weight:bold;color:#000;transform:scaleX(0.9014);">Frequenz</span>
<div style="left:1876.0px;top:571.5px;width:104.0px;height:104.0px;border-radius:50%;background:linear-gradient(135deg,#8a8a8a 14%,#989898 38%,#a8a8a8 56%,#d2d2d2 72%,#ffffff 86%);filter:blur(1.5px);"></div>
<div style="left:1885.0px;top:580.5px;width:84.0px;height:84.0px;border-radius:50%;background:radial-gradient(circle at 33% 29%,#f8f8f8 0%,#e0e0e0 6%,#cdcdcd 20%,#bbbbbb 40%,#a0a0a0 57%,#7e7e7e 69%,#5a5a5a 79%);"></div>
<svg style="position:absolute;left:0;top:0;overflow:visible" width="1" height="1"><path d="M1903.9 576.3L1898.5 565.6M1952.1 576.3L1957.5 565.6M1874.7 615.1L1863.8 613.3M1981.3 615.1L1992.2 613.3M1889.1 662.4L1880.6 670.9M1966.9 662.4L1975.4 670.9" stroke="#151515" stroke-width="1.9" fill="none"/><path d="M1902.5 647L1920 633" stroke="#2152e0" stroke-width="2.6" fill="none"/></svg>
<span class="t" style="left:1877.13px;top:537.03px;font-size:23px;font-weight:bold;color:#000;transform:scaleX(1.0721);">4k</span>
<span class="t" style="left:1955.14px;top:537.03px;font-size:23px;font-weight:bold;color:#000;transform:scaleX(1.0718);">6k</span>
<span class="t" style="left:1834.12px;top:602.03px;font-size:23px;font-weight:bold;color:#000;transform:scaleX(1.0920);">2k</span>
<span class="t" style="left:1997.26px;top:600.53px;font-size:23px;font-weight:bold;color:#000;transform:scaleX(1.0668);">8k</span>
<span class="t" style="left:1854.99px;top:674.53px;font-size:23px;font-weight:bold;color:#000;transform:scaleX(1.0977);">10</span>
<span class="t" style="left:1973.52px;top:678.53px;font-size:23px;font-weight:bold;color:#000;transform:scaleX(1.0700);">10k</span>
<div style="left:1850.5px;top:708.5px;width:22.5px;height:47.0px;"><svg width="22.5" height="47.0" viewBox="0 0 22 46" preserveAspectRatio="none" style="position:absolute;left:0;top:0;"><defs><linearGradient id="spg" x1="0" y1="0" x2="1" y2="0.35"><stop offset="0" stop-color="#f4f4f4"/><stop offset=".4" stop-color="#dadada"/><stop offset=".78" stop-color="#b4b4b4"/><stop offset="1" stop-color="#505050"/></linearGradient></defs><ellipse cx="11" cy="23" rx="10.6" ry="22.6" fill="url(#spg)"/><path d="M1 23.5H21" stroke="#8a8a8a" stroke-width="1"/><path d="M1 24.6H21" stroke="#eee" stroke-width="1"/><path d="M11 11L13.6 16.5H8.4Z" fill="#2a2a2a"/><path d="M11 35.5L13.6 30H8.4Z" fill="#2a2a2a"/></svg></div>
<div style="left:1873.5px;top:711.0px;width:100.5px;height:48.0px;box-sizing:border-box;border-style:solid;border-width:3.50px 4.00px 3.50px 3.25px;border-color:#a6a6a6 #bdbdbd #bdbdbd #a6a6a6;"></div>
<div style="left:1876.8px;top:714.5px;width:93.2px;height:41.0px;box-sizing:border-box;border-style:solid;border-width:3.50px 4.00px 3.50px 3.25px;border-color:#8b8b8b #c2c2c2 #c2c2c2 #8b8b8b;background:#fff;"></div>
<span class="t" style="left:1884.13px;top:724.53px;font-size:23px;font-weight:normal;color:#000;transform:scaleX(0.9464);">315</span>
<span class="t" style="left:1976.38px;top:721.34px;font-size:25px;font-weight:bold;color:#000;transform:scaleX(1.0000);">Hz</span>
<div style="left:2247.0px;top:575.0px;width:104.0px;height:104.0px;border-radius:50%;background:linear-gradient(135deg,#8a8a8a 14%,#989898 38%,#a8a8a8 56%,#d2d2d2 72%,#ffffff 86%);filter:blur(1.5px);"></div>
<div style="left:2256.0px;top:584.0px;width:84.0px;height:84.0px;border-radius:50%;background:radial-gradient(circle at 33% 29%,#f8f8f8 0%,#e0e0e0 6%,#cdcdcd 20%,#bbbbbb 40%,#a0a0a0 57%,#7e7e7e 69%,#5a5a5a 79%);"></div>
<svg style="position:absolute;left:0;top:0;overflow:visible" width="1" height="1"><path d="M2274.9 579.8L2269.5 569.1M2323.1 579.8L2328.5 569.1M2245.7 618.6L2234.8 616.8M2352.3 618.6L2363.2 616.8M2260.1 665.9L2251.6 674.4M2337.9 665.9L2346.4 674.4" stroke="#151515" stroke-width="1.9" fill="none"/><path d="M2272.5 650L2291 634" stroke="#2152e0" stroke-width="2.6" fill="none"/></svg>
<span class="t" style="left:2248.63px;top:542.53px;font-size:23px;font-weight:bold;color:#000;transform:scaleX(1.0721);">4k</span>
<span class="t" style="left:2322.64px;top:542.53px;font-size:23px;font-weight:bold;color:#000;transform:scaleX(1.0718);">6k</span>
<span class="t" style="left:2206.62px;top:606.03px;font-size:23px;font-weight:bold;color:#000;transform:scaleX(1.0920);">2k</span>
<span class="t" style="left:2364.76px;top:606.03px;font-size:23px;font-weight:bold;color:#000;transform:scaleX(1.0668);">8k</span>
<span class="t" style="left:2227.01px;top:676.03px;font-size:23px;font-weight:bold;color:#000;transform:scaleX(1.0762);">10</span>
<span class="t" style="left:2341.02px;top:680.03px;font-size:23px;font-weight:bold;color:#000;transform:scaleX(1.0700);">10k</span>
<div style="left:2220.5px;top:711.0px;width:22.5px;height:47.0px;"><svg width="22.5" height="47.0" viewBox="0 0 22 46" preserveAspectRatio="none" style="position:absolute;left:0;top:0;"><defs><linearGradient id="spg" x1="0" y1="0" x2="1" y2="0.35"><stop offset="0" stop-color="#f4f4f4"/><stop offset=".4" stop-color="#dadada"/><stop offset=".78" stop-color="#b4b4b4"/><stop offset="1" stop-color="#505050"/></linearGradient></defs><ellipse cx="11" cy="23" rx="10.6" ry="22.6" fill="url(#spg)"/><path d="M1 23.5H21" stroke="#8a8a8a" stroke-width="1"/><path d="M1 24.6H21" stroke="#eee" stroke-width="1"/><path d="M11 11L13.6 16.5H8.4Z" fill="#2a2a2a"/><path d="M11 35.5L13.6 30H8.4Z" fill="#2a2a2a"/></svg></div>
<div style="left:2243.5px;top:714.0px;width:104.5px;height:47.0px;box-sizing:border-box;border-style:solid;border-width:3.00px 3.75px 3.75px 3.25px;border-color:#a6a6a6 #bdbdbd #bdbdbd #a6a6a6;"></div>
<div style="left:2246.8px;top:717.0px;width:97.5px;height:40.2px;box-sizing:border-box;border-style:solid;border-width:3.00px 3.75px 3.75px 3.25px;border-color:#8b8b8b #c2c2c2 #c2c2c2 #8b8b8b;background:#fff;"></div>
<span class="t" style="left:2253.60px;top:727.03px;font-size:23px;font-weight:normal;color:#000;transform:scaleX(0.9738);">315</span>
<span class="t" style="left:2349.85px;top:724.84px;font-size:25px;font-weight:bold;color:#000;transform:scaleX(1.0179);">Hz</span>
<div style="left:2016.0px;top:766.0px;width:26.0px;height:25.0px;box-sizing:border-box;border-radius:4px;background:#f5f5f5;border:2px solid #7c7c7c;"></div>
<div style="left:2188.0px;top:766.0px;width:25.5px;height:25.5px;box-sizing:border-box;border-radius:4px;background:#f5f5f5;border:2px solid #7c7c7c;"></div>
<span class="t" style="left:2077.85px;top:767.03px;font-size:23px;font-weight:bold;color:#000;transform:scaleX(0.9412);">Sweep</span>
<span class="t" style="left:1823.13px;top:795.34px;font-size:25px;font-weight:bold;color:#000;transform:scaleX(0.9793);">f ende</span>
<span class="t" style="left:1981.75px;top:797.34px;font-size:25px;font-weight:bold;color:#000;transform:scaleX(1.0029);">Zeit</span>
<span class="t" style="left:2175.14px;top:796.84px;font-size:25px;font-weight:bold;color:#000;transform:scaleX(0.9724);">f ende</span>
<span class="t" style="left:2341.76px;top:796.84px;font-size:25px;font-weight:bold;color:#000;transform:scaleX(0.9914);">Zeit</span>
<div style="left:1798.5px;top:822.0px;width:22.0px;height:47.0px;"><svg width="22.0" height="47.0" viewBox="0 0 22 46" preserveAspectRatio="none" style="position:absolute;left:0;top:0;"><defs><linearGradient id="spg" x1="0" y1="0" x2="1" y2="0.35"><stop offset="0" stop-color="#f4f4f4"/><stop offset=".4" stop-color="#dadada"/><stop offset=".78" stop-color="#b4b4b4"/><stop offset="1" stop-color="#505050"/></linearGradient></defs><ellipse cx="11" cy="23" rx="10.6" ry="22.6" fill="url(#spg)"/><path d="M1 23.5H21" stroke="#8a8a8a" stroke-width="1"/><path d="M1 24.6H21" stroke="#eee" stroke-width="1"/><path d="M11 11L13.6 16.5H8.4Z" fill="#2a2a2a"/><path d="M11 35.5L13.6 30H8.4Z" fill="#2a2a2a"/></svg></div>
<div style="left:1821.0px;top:825.0px;width:84.0px;height:47.5px;box-sizing:border-box;border-style:solid;border-width:3.50px 3.25px 3.75px 3.25px;border-color:#a6a6a6 #bdbdbd #bdbdbd #a6a6a6;"></div>
<div style="left:1824.2px;top:828.5px;width:77.5px;height:40.2px;box-sizing:border-box;border-style:solid;border-width:3.50px 3.25px 3.75px 3.25px;border-color:#8b8b8b #c2c2c2 #c2c2c2 #8b8b8b;background:#fff;"></div>
<span class="t" style="left:1831.86px;top:838.53px;font-size:23px;font-weight:normal;color:#000;transform:scaleX(0.9526);">10000</span>
<span class="t" style="left:1908.88px;top:838.84px;font-size:25px;font-weight:bold;color:#000;transform:scaleX(1.0000);">Hz</span>
<div style="left:1959.0px;top:824.5px;width:21.5px;height:46.5px;"><svg width="21.5" height="46.5" viewBox="0 0 22 46" preserveAspectRatio="none" style="position:absolute;left:0;top:0;"><defs><linearGradient id="spg" x1="0" y1="0" x2="1" y2="0.35"><stop offset="0" stop-color="#f4f4f4"/><stop offset=".4" stop-color="#dadada"/><stop offset=".78" stop-color="#b4b4b4"/><stop offset="1" stop-color="#505050"/></linearGradient></defs><ellipse cx="11" cy="23" rx="10.6" ry="22.6" fill="url(#spg)"/><path d="M1 23.5H21" stroke="#8a8a8a" stroke-width="1"/><path d="M1 24.6H21" stroke="#eee" stroke-width="1"/><path d="M11 11L13.6 16.5H8.4Z" fill="#2a2a2a"/><path d="M11 35.5L13.6 30H8.4Z" fill="#2a2a2a"/></svg></div>
<div style="left:1981.0px;top:827.0px;width:71.0px;height:47.5px;box-sizing:border-box;border-style:solid;border-width:3.25px 3.75px 3.50px 3.25px;border-color:#a6a6a6 #bdbdbd #bdbdbd #a6a6a6;"></div>
<div style="left:1984.2px;top:830.2px;width:64.0px;height:40.8px;box-sizing:border-box;border-style:solid;border-width:3.25px 3.75px 3.50px 3.25px;border-color:#8b8b8b #c2c2c2 #c2c2c2 #8b8b8b;background:#fff;"></div>
<span class="t" style="left:1993.20px;top:839.53px;font-size:23px;font-weight:normal;color:#000;transform:scaleX(0.8696);">5</span>
<span class="t" style="left:2054.31px;top:838.22px;font-size:21px;font-weight:bold;color:#000;transform:scaleX(0.9425);">s</span>
<div style="left:2151.0px;top:823.0px;width:22.0px;height:47.0px;"><svg width="22.0" height="47.0" viewBox="0 0 22 46" preserveAspectRatio="none" style="position:absolute;left:0;top:0;"><defs><linearGradient id="spg" x1="0" y1="0" x2="1" y2="0.35"><stop offset="0" stop-color="#f4f4f4"/><stop offset=".4" stop-color="#dadada"/><stop offset=".78" stop-color="#b4b4b4"/><stop offset="1" stop-color="#505050"/></linearGradient></defs><ellipse cx="11" cy="23" rx="10.6" ry="22.6" fill="url(#spg)"/><path d="M1 23.5H21" stroke="#8a8a8a" stroke-width="1"/><path d="M1 24.6H21" stroke="#eee" stroke-width="1"/><path d="M11 11L13.6 16.5H8.4Z" fill="#2a2a2a"/><path d="M11 35.5L13.6 30H8.4Z" fill="#2a2a2a"/></svg></div>
<div style="left:2173.5px;top:826.5px;width:84.0px;height:48.5px;box-sizing:border-box;border-style:solid;border-width:3.75px 3.50px 3.75px 3.25px;border-color:#a6a6a6 #bdbdbd #bdbdbd #a6a6a6;"></div>
<div style="left:2176.8px;top:830.2px;width:77.2px;height:41.0px;box-sizing:border-box;border-style:solid;border-width:3.75px 3.50px 3.75px 3.25px;border-color:#8b8b8b #c2c2c2 #c2c2c2 #8b8b8b;background:#fff;"></div>
<span class="t" style="left:2184.87px;top:840.53px;font-size:23px;font-weight:normal;color:#000;transform:scaleX(0.9445);">10000</span>
<span class="t" style="left:2262.38px;top:840.34px;font-size:25px;font-weight:bold;color:#000;transform:scaleX(1.0000);">Hz</span>
<div style="left:2318.5px;top:824.5px;width:21.5px;height:47.0px;"><svg width="21.5" height="47.0" viewBox="0 0 22 46" preserveAspectRatio="none" style="position:absolute;left:0;top:0;"><defs><linearGradient id="spg" x1="0" y1="0" x2="1" y2="0.35"><stop offset="0" stop-color="#f4f4f4"/><stop offset=".4" stop-color="#dadada"/><stop offset=".78" stop-color="#b4b4b4"/><stop offset="1" stop-color="#505050"/></linearGradient></defs><ellipse cx="11" cy="23" rx="10.6" ry="22.6" fill="url(#spg)"/><path d="M1 23.5H21" stroke="#8a8a8a" stroke-width="1"/><path d="M1 24.6H21" stroke="#eee" stroke-width="1"/><path d="M11 11L13.6 16.5H8.4Z" fill="#2a2a2a"/><path d="M11 35.5L13.6 30H8.4Z" fill="#2a2a2a"/></svg></div>
<div style="left:2340.5px;top:826.5px;width:79.5px;height:49.0px;box-sizing:border-box;border-style:solid;border-width:3.75px 3.75px 4.00px 3.50px;border-color:#a6a6a6 #bdbdbd #bdbdbd #a6a6a6;"></div>
<div style="left:2344.0px;top:830.2px;width:72.2px;height:41.2px;box-sizing:border-box;border-style:solid;border-width:3.75px 3.75px 4.00px 3.50px;border-color:#8b8b8b #c2c2c2 #c2c2c2 #8b8b8b;background:#fff;"></div>
<span class="t" style="left:2353.20px;top:840.03px;font-size:23px;font-weight:normal;color:#000;transform:scaleX(0.8696);">5</span>
<span class="t" style="left:2419.81px;top:837.72px;font-size:21px;font-weight:bold;color:#000;transform:scaleX(0.9425);">s</span>
<span class="t" style="left:2062.07px;top:884.72px;font-size:21px;font-weight:bold;color:#000;transform:scaleX(1.0497);">Direkt zum</span>
<span class="t" style="left:2085.87px;top:910.22px;font-size:21px;font-weight:bold;color:#000;transform:scaleX(1.0042);">Scope</span>
<div style="left:1792.0px;top:927.5px;width:188.5px;height:54.5px;box-sizing:border-box;border-style:solid;border-width:3.50px 3.50px 3.50px 3.50px;border-color:#a6a6a6 #bdbdbd #bdbdbd #a6a6a6;"></div>
<div style="left:1795.5px;top:931.0px;width:181.5px;height:47.5px;box-sizing:border-box;border-style:solid;border-width:3.50px 3.50px 3.50px 3.50px;border-color:#8b8b8b #c2c2c2 #c2c2c2 #8b8b8b;background:#b4b4b4;"></div>
<div style="left:1800.7px;top:936.7px;width:24.6px;height:24.6px;box-sizing:border-box;border-radius:50%;background:#f5f5f5;border:2px solid #7c7c7c;"></div>
<div style="left:1884.7px;top:936.7px;width:24.6px;height:24.6px;box-sizing:border-box;border-radius:50%;background:#f5f5f5;border:2px solid #7c7c7c;"></div>
<span class="t" style="left:1834.11px;top:939.26px;font-size:24.5px;font-weight:bold;color:#000;transform:scaleX(0.9070);font-weight:600;">CH1</span>
<span class="t" style="left:1921.56px;top:939.26px;font-size:24.5px;font-weight:bold;color:#000;transform:scaleX(0.9566);">CH2</span>
<div style="left:2254.0px;top:927.5px;width:188.0px;height:54.5px;box-sizing:border-box;border-style:solid;border-width:3.50px 3.50px 3.50px 3.50px;border-color:#a6a6a6 #bdbdbd #bdbdbd #a6a6a6;"></div>
<div style="left:2257.5px;top:931.0px;width:181.0px;height:47.5px;box-sizing:border-box;border-style:solid;border-width:3.50px 3.50px 3.50px 3.50px;border-color:#8b8b8b #c2c2c2 #c2c2c2 #8b8b8b;background:#b4b4b4;"></div>
<div style="left:2262.7px;top:936.7px;width:24.6px;height:24.6px;box-sizing:border-box;border-radius:50%;background:#f5f5f5;border:2px solid #7c7c7c;"></div>
<div style="left:2346.2px;top:936.7px;width:24.6px;height:24.6px;box-sizing:border-box;border-radius:50%;background:#f5f5f5;border:2px solid #7c7c7c;"></div>
<span class="t" style="left:2295.61px;top:939.26px;font-size:24.5px;font-weight:bold;color:#000;transform:scaleX(0.9070);font-weight:600;">CH1</span>
<span class="t" style="left:2383.57px;top:939.26px;font-size:24.5px;font-weight:bold;color:#000;transform:scaleX(0.9460);">CH2</span>
<div style="left:1826.0px;top:1022.0px;width:134.0px;height:38.0px;box-sizing:border-box;border:2px solid #474747;background:linear-gradient(90deg,transparent calc(100% - 8px),#a2a2a2 calc(100% - 8px),#7a7a7a calc(100% - 3px),#5c5c5c 100%),linear-gradient(180deg,transparent calc(100% - 4.5px),#8c8c8c calc(100% - 4.5px),#6e6e6e calc(100% - 2px),#5a5a5a 100%),linear-gradient(180deg,#e4e4e4 0,#dcdcdc 3px,transparent 3.5px),linear-gradient(90deg,#e2e2e2 0,#d2d2d2 4px,#bcbcbc 7px,transparent 7.5px),linear-gradient(180deg,#cacaca 0%,#c3c3c3 50%,#b9b9b9 100%);"></div>
<span class="t" style="left:1839.78px;top:1031.95px;font-size:22.5px;font-weight:bold;color:#000;transform:scaleX(0.9119);">schliessen</span>
<span class="t" style="left:2172.13px;top:1031.45px;font-size:22.5px;font-weight:bold;color:#000;transform:scaleX(0.9357);">Phase</span>
<div style="left:2242.0px;top:1018.5px;width:22.0px;height:47.0px;"><svg width="22.0" height="47.0" viewBox="0 0 22 46" preserveAspectRatio="none" style="position:absolute;left:0;top:0;"><defs><linearGradient id="spg" x1="0" y1="0" x2="1" y2="0.35"><stop offset="0" stop-color="#f4f4f4"/><stop offset=".4" stop-color="#dadada"/><stop offset=".78" stop-color="#b4b4b4"/><stop offset="1" stop-color="#505050"/></linearGradient></defs><ellipse cx="11" cy="23" rx="10.6" ry="22.6" fill="url(#spg)"/><path d="M1 23.5H21" stroke="#8a8a8a" stroke-width="1"/><path d="M1 24.6H21" stroke="#eee" stroke-width="1"/><path d="M11 11L13.6 16.5H8.4Z" fill="#2a2a2a"/><path d="M11 35.5L13.6 30H8.4Z" fill="#2a2a2a"/></svg></div>
<div style="left:2265.0px;top:1021.0px;width:71.0px;height:48.0px;box-sizing:border-box;border-style:solid;border-width:3.75px 3.75px 3.50px 3.50px;border-color:#a6a6a6 #bdbdbd #bdbdbd #a6a6a6;"></div>
<div style="left:2268.5px;top:1024.8px;width:63.8px;height:40.8px;box-sizing:border-box;border-style:solid;border-width:3.75px 3.75px 3.50px 3.50px;border-color:#8b8b8b #c2c2c2 #c2c2c2 #8b8b8b;background:#fff;"></div>
<span class="t" style="left:2277.12px;top:1033.53px;font-size:23px;font-weight:normal;color:#000;transform:scaleX(0.9511);">0</span>
<span class="t" style="left:2340.64px;top:1031.45px;font-size:22.5px;font-weight:bold;color:#000;transform:scaleX(0.9567);">Grad</span>
</div></div>
</body></html>
